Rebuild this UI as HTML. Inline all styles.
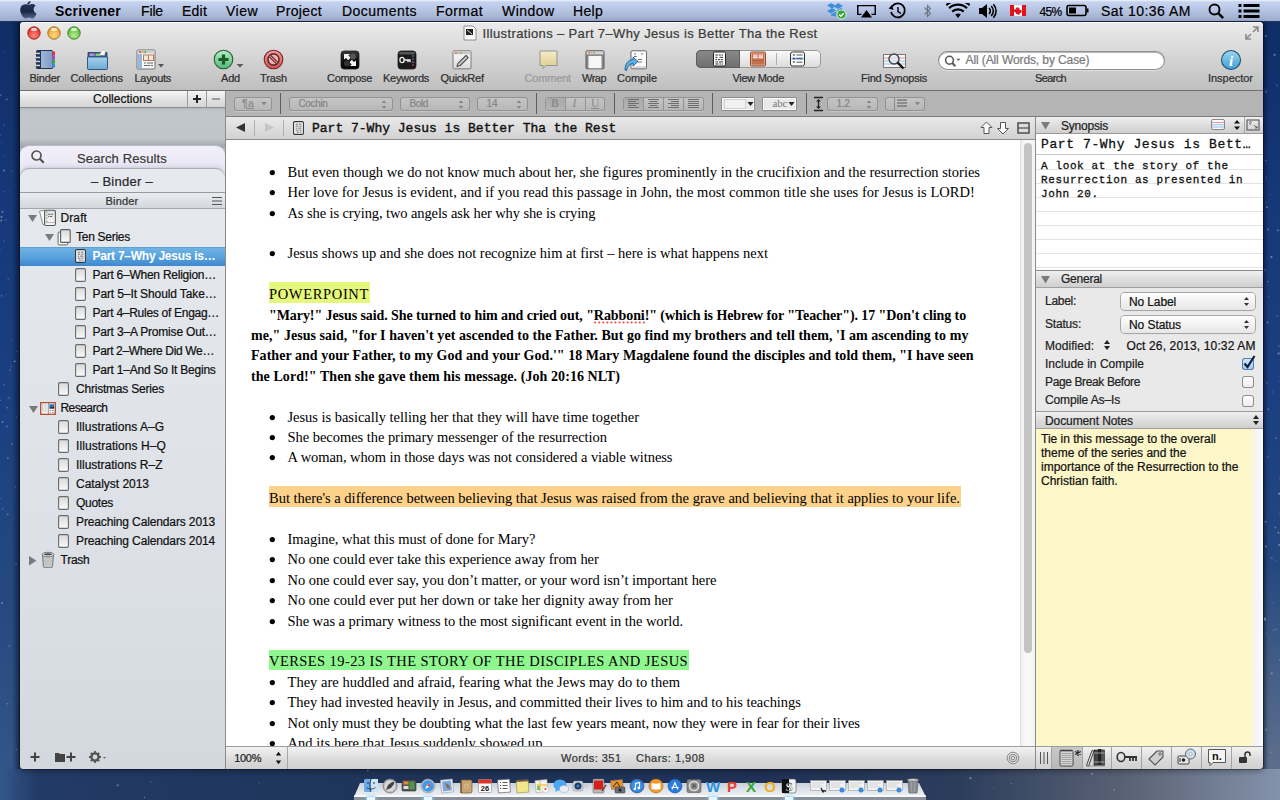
<!DOCTYPE html><html><head><meta charset="utf-8"><title>Scrivener</title><style>
*{margin:0;padding:0;box-sizing:border-box}
html,body{width:1280px;height:800px;overflow:hidden;background:#0f2a5a}
body{position:relative;font-family:"Liberation Sans",sans-serif}
.t{position:absolute;white-space:nowrap}
.r{position:absolute}
</style></head><body><div class="r" style="left:0px;top:0px;width:1280px;height:800px;background:linear-gradient(180deg,#0f2c64 0%,#163878 25%,#1b3f80 50%,#25497f 75%,#35588a 100%)"></div>
<div class="r" style="left:0px;top:769px;width:1280px;height:31px;background:linear-gradient(90deg,#33578a 0%,#223a66 3%,#1f3459 30%,#1f3156 60%,#2c3d5c 75%,#5a6275 88%,#8392aa 100%)"></div>
<div class="r" style="left:1263px;top:560px;width:17px;height:209px;background:linear-gradient(180deg,rgba(90,100,120,0) 0%,rgba(110,120,140,.7) 100%)"></div>
<div class="r" style="left:0px;top:22px;width:20px;height:747px;background:linear-gradient(90deg,rgba(0,0,0,0) 0%,rgba(0,0,0,0) 60%,rgba(5,15,40,.55) 100%)"></div>
<div class="r" style="left:1263px;top:22px;width:17px;height:747px;background:linear-gradient(90deg,rgba(5,15,40,.45) 0%,rgba(0,0,0,0) 30%)"></div>
<svg class="r" style="left:0px;top:0px;" width="1280" height="800" viewBox="0 0 1280 800"><circle cx="2.6" cy="508.9" r="0.7" fill="#d8e6ff" fill-opacity="0.39"/><circle cx="9.9" cy="702.5" r="0.7" fill="#d8e6ff" fill-opacity="0.13"/><circle cx="1266.0" cy="89.9" r="0.9" fill="#d8e6ff" fill-opacity="0.14"/><circle cx="1279.2" cy="493.7" r="1.1" fill="#d8e6ff" fill-opacity="0.43"/><circle cx="1271.0" cy="752.2" r="0.7" fill="#d8e6ff" fill-opacity="0.30"/><circle cx="7.1" cy="426.4" r="1.1" fill="#d8e6ff" fill-opacity="0.22"/><circle cx="1267.7" cy="457.0" r="1.1" fill="#d8e6ff" fill-opacity="0.18"/><circle cx="12.1" cy="444.1" r="1.1" fill="#d8e6ff" fill-opacity="0.19"/><circle cx="1271.4" cy="257.0" r="1.1" fill="#d8e6ff" fill-opacity="0.42"/><circle cx="4.2" cy="156.5" r="0.7" fill="#d8e6ff" fill-opacity="0.15"/><circle cx="8.4" cy="278.9" r="0.9" fill="#d8e6ff" fill-opacity="0.22"/><circle cx="151.1" cy="782.0" r="0.9" fill="#d8e6ff" fill-opacity="0.17"/><circle cx="1265.6" cy="521.8" r="1.1" fill="#d8e6ff" fill-opacity="0.31"/><circle cx="401.6" cy="790.6" r="1.1" fill="#d8e6ff" fill-opacity="0.28"/><circle cx="1266.0" cy="92.0" r="0.9" fill="#d8e6ff" fill-opacity="0.28"/><circle cx="1265.9" cy="546.7" r="1.1" fill="#d8e6ff" fill-opacity="0.31"/><circle cx="1271.7" cy="558.0" r="1.1" fill="#d8e6ff" fill-opacity="0.23"/><circle cx="455.0" cy="787.9" r="0.9" fill="#d8e6ff" fill-opacity="0.14"/><circle cx="1266.9" cy="207.2" r="0.9" fill="#d8e6ff" fill-opacity="0.42"/><circle cx="1267.5" cy="322.4" r="0.9" fill="#d8e6ff" fill-opacity="0.41"/><circle cx="1278.0" cy="230.3" r="0.9" fill="#d8e6ff" fill-opacity="0.45"/><circle cx="1270.7" cy="194.6" r="0.7" fill="#d8e6ff" fill-opacity="0.18"/><circle cx="4.0" cy="384.8" r="1.1" fill="#d8e6ff" fill-opacity="0.18"/><circle cx="2.5" cy="421.9" r="1.1" fill="#d8e6ff" fill-opacity="0.31"/><circle cx="883.8" cy="785.0" r="1.1" fill="#d8e6ff" fill-opacity="0.34"/><circle cx="1271.8" cy="673.5" r="1.1" fill="#d8e6ff" fill-opacity="0.38"/><circle cx="6.8" cy="99.4" r="1.1" fill="#d8e6ff" fill-opacity="0.25"/><circle cx="16.7" cy="351.6" r="0.7" fill="#d8e6ff" fill-opacity="0.23"/><circle cx="0.0" cy="135.1" r="0.7" fill="#d8e6ff" fill-opacity="0.43"/><circle cx="1266.1" cy="177.5" r="0.9" fill="#d8e6ff" fill-opacity="0.17"/><circle cx="5.9" cy="294.4" r="0.7" fill="#d8e6ff" fill-opacity="0.16"/><circle cx="1279.7" cy="381.3" r="0.9" fill="#d8e6ff" fill-opacity="0.15"/><circle cx="5.8" cy="220.0" r="1.1" fill="#d8e6ff" fill-opacity="0.17"/><circle cx="16.2" cy="417.1" r="0.7" fill="#d8e6ff" fill-opacity="0.35"/><circle cx="970.4" cy="778.2" r="1.1" fill="#d8e6ff" fill-opacity="0.40"/><circle cx="1268.9" cy="296.3" r="0.7" fill="#d8e6ff" fill-opacity="0.24"/><circle cx="9.2" cy="398.0" r="1.1" fill="#d8e6ff" fill-opacity="0.19"/><circle cx="1279.8" cy="659.8" r="0.7" fill="#d8e6ff" fill-opacity="0.39"/><circle cx="1268.4" cy="409.2" r="0.9" fill="#d8e6ff" fill-opacity="0.36"/><circle cx="1011.3" cy="783.6" r="0.7" fill="#d8e6ff" fill-opacity="0.35"/><circle cx="572.5" cy="798.0" r="0.9" fill="#d8e6ff" fill-opacity="0.44"/><circle cx="3.7" cy="191.7" r="0.7" fill="#d8e6ff" fill-opacity="0.23"/><circle cx="1279.8" cy="478.5" r="0.7" fill="#d8e6ff" fill-opacity="0.28"/><circle cx="1277.0" cy="85.4" r="1.1" fill="#d8e6ff" fill-opacity="0.16"/><circle cx="12.1" cy="171.1" r="0.7" fill="#d8e6ff" fill-opacity="0.26"/><circle cx="1266.3" cy="729.7" r="1.1" fill="#d8e6ff" fill-opacity="0.25"/><circle cx="16.1" cy="564.1" r="0.7" fill="#d8e6ff" fill-opacity="0.45"/><circle cx="10.0" cy="370.1" r="1.1" fill="#d8e6ff" fill-opacity="0.17"/><circle cx="1279.7" cy="513.6" r="0.9" fill="#d8e6ff" fill-opacity="0.17"/><circle cx="1265.3" cy="619.9" r="1.1" fill="#d8e6ff" fill-opacity="0.33"/><circle cx="1279.0" cy="346.5" r="0.7" fill="#d8e6ff" fill-opacity="0.39"/><circle cx="4.3" cy="241.1" r="0.7" fill="#d8e6ff" fill-opacity="0.37"/><circle cx="9.3" cy="646.0" r="0.7" fill="#d8e6ff" fill-opacity="0.42"/><circle cx="7.8" cy="458.3" r="1.1" fill="#d8e6ff" fill-opacity="0.26"/><circle cx="642.1" cy="785.5" r="1.1" fill="#d8e6ff" fill-opacity="0.29"/><circle cx="993.9" cy="787.9" r="0.7" fill="#d8e6ff" fill-opacity="0.18"/><circle cx="1275.9" cy="438.2" r="0.9" fill="#d8e6ff" fill-opacity="0.35"/><circle cx="1272.2" cy="602.8" r="1.1" fill="#d8e6ff" fill-opacity="0.14"/><circle cx="0.7" cy="95.1" r="0.9" fill="#d8e6ff" fill-opacity="0.31"/><circle cx="1278.7" cy="353.5" r="1.1" fill="#d8e6ff" fill-opacity="0.44"/><circle cx="1268.0" cy="229.3" r="1.1" fill="#d8e6ff" fill-opacity="0.30"/><circle cx="1279.1" cy="545.0" r="0.9" fill="#d8e6ff" fill-opacity="0.42"/><circle cx="259.3" cy="782.9" r="0.9" fill="#d8e6ff" fill-opacity="0.16"/><circle cx="1266.1" cy="202.0" r="0.7" fill="#d8e6ff" fill-opacity="0.19"/><circle cx="2.1" cy="603.1" r="1.1" fill="#d8e6ff" fill-opacity="0.33"/><circle cx="4.3" cy="124.7" r="0.9" fill="#d8e6ff" fill-opacity="0.19"/><circle cx="509.8" cy="784.1" r="1.1" fill="#d8e6ff" fill-opacity="0.39"/><circle cx="7.3" cy="407.7" r="0.9" fill="#d8e6ff" fill-opacity="0.26"/><circle cx="1.6" cy="295.7" r="0.9" fill="#d8e6ff" fill-opacity="0.30"/><circle cx="1265.3" cy="270.0" r="1.1" fill="#d8e6ff" fill-opacity="0.22"/><circle cx="144.4" cy="797.5" r="0.7" fill="#d8e6ff" fill-opacity="0.44"/><circle cx="4.5" cy="51.6" r="0.7" fill="#d8e6ff" fill-opacity="0.21"/><circle cx="7.2" cy="703.7" r="0.9" fill="#d8e6ff" fill-opacity="0.25"/><circle cx="1272.7" cy="392.0" r="0.9" fill="#d8e6ff" fill-opacity="0.15"/><circle cx="11.7" cy="340.1" r="0.7" fill="#d8e6ff" fill-opacity="0.21"/><circle cx="1.5" cy="216.9" r="1.1" fill="#d8e6ff" fill-opacity="0.40"/><circle cx="14.7" cy="361.4" r="0.9" fill="#d8e6ff" fill-opacity="0.45"/><circle cx="15.6" cy="487.0" r="0.7" fill="#d8e6ff" fill-opacity="0.29"/><circle cx="1.9" cy="142.8" r="0.7" fill="#d8e6ff" fill-opacity="0.18"/><circle cx="804.7" cy="785.5" r="0.7" fill="#d8e6ff" fill-opacity="0.22"/><circle cx="1267.7" cy="281.6" r="0.7" fill="#d8e6ff" fill-opacity="0.45"/><circle cx="0.3" cy="400.2" r="0.7" fill="#d8e6ff" fill-opacity="0.29"/><circle cx="7.6" cy="514.4" r="1.1" fill="#d8e6ff" fill-opacity="0.26"/><circle cx="1277.5" cy="316.0" r="1.1" fill="#d8e6ff" fill-opacity="0.22"/><circle cx="3.9" cy="170.6" r="1.1" fill="#d8e6ff" fill-opacity="0.36"/><circle cx="16.8" cy="756.4" r="0.7" fill="#d8e6ff" fill-opacity="0.12"/><circle cx="1278.2" cy="344.2" r="0.7" fill="#d8e6ff" fill-opacity="0.15"/><circle cx="1114.3" cy="789.8" r="0.9" fill="#d8e6ff" fill-opacity="0.32"/><circle cx="1265.7" cy="160.6" r="0.9" fill="#d8e6ff" fill-opacity="0.27"/><circle cx="16.4" cy="749.5" r="1.1" fill="#d8e6ff" fill-opacity="0.23"/><circle cx="15.0" cy="185.0" r="0.7" fill="#d8e6ff" fill-opacity="0.12"/><circle cx="8.1" cy="398.1" r="0.7" fill="#d8e6ff" fill-opacity="0.20"/><circle cx="1266.4" cy="633.1" r="0.7" fill="#d8e6ff" fill-opacity="0.25"/><circle cx="0.4" cy="249.6" r="0.7" fill="#d8e6ff" fill-opacity="0.15"/><circle cx="1092.2" cy="773.8" r="1.1" fill="#d8e6ff" fill-opacity="0.38"/><circle cx="1276.5" cy="561.1" r="0.9" fill="#d8e6ff" fill-opacity="0.17"/><circle cx="1274.6" cy="54.8" r="1.1" fill="#d8e6ff" fill-opacity="0.41"/><circle cx="1276.0" cy="629.5" r="0.7" fill="#d8e6ff" fill-opacity="0.42"/><circle cx="1273.5" cy="630.1" r="0.7" fill="#d8e6ff" fill-opacity="0.39"/><circle cx="1278.4" cy="532.8" r="1.1" fill="#d8e6ff" fill-opacity="0.33"/><circle cx="0.7" cy="498.6" r="0.7" fill="#d8e6ff" fill-opacity="0.24"/><circle cx="1265.8" cy="36.1" r="1.1" fill="#d8e6ff" fill-opacity="0.34"/><circle cx="1265.0" cy="618.7" r="1.1" fill="#d8e6ff" fill-opacity="0.43"/><circle cx="117.7" cy="785.3" r="1.1" fill="#d8e6ff" fill-opacity="0.36"/><circle cx="1.3" cy="220.6" r="1.1" fill="#d8e6ff" fill-opacity="0.37"/><circle cx="11.0" cy="366.3" r="0.9" fill="#d8e6ff" fill-opacity="0.15"/><circle cx="367.8" cy="770.4" r="1.1" fill="#d8e6ff" fill-opacity="0.33"/><circle cx="2.5" cy="211.9" r="1.1" fill="#d8e6ff" fill-opacity="0.35"/><circle cx="1267.0" cy="382.9" r="0.9" fill="#d8e6ff" fill-opacity="0.21"/><circle cx="1275.4" cy="527.4" r="0.9" fill="#d8e6ff" fill-opacity="0.35"/></svg>
<div class="r" style="left:0px;top:0px;width:1280px;height:21px;background:linear-gradient(180deg,#eef2fa 0px,#c6d3ef 2px,#b6c4e4 50%,#9daccb 100%)"></div>
<div class="r" style="left:0px;top:21px;width:1280px;height:1px;background:#24355c"></div>
<svg class="r" style="left:19px;top:1px;" width="18" height="19" viewBox="0 0 18 19"><defs><linearGradient id="ap" x1="0" y1="0" x2="0" y2="1"><stop offset="0" stop-color="#2a3a5e"/><stop offset=".6" stop-color="#1a2746"/><stop offset="1" stop-color="#56688e"/></linearGradient></defs><path d="M11.6 1.2c-.9.1-2 .7-2.6 1.5-.6.7-1 1.7-.9 2.6 1 .1 2-.5 2.6-1.3.6-.8 1-1.8.9-2.8zM14.6 10.1c0-2.4 2-3.5 2.1-3.6-1.1-1.7-2.9-1.9-3.5-1.9-1.5-.2-2.9.9-3.7.9-.8 0-1.9-.9-3.2-.8C4.600 4.700 3 5.700 2.100 7.200.300 10.400 1.600 15.100 3.400 17.600c.9 1.200 1.900 2.600 3.200 2.500 1.300-.1 1.800-.8 3.300-.8s2 .8 3.300.8c1.400 0 2.200-1.200 3.100-2.500.6-.9 1.100-1.800 1.400-2.800-.1 0-2.900-1.100-3.100-4.700z" transform="translate(0,-1.2) scale(1,0.93)" fill="url(#ap)"/></svg>
<div class="t " style="left:55px;top:4.00px;font-family:'Liberation Sans', sans-serif;font-weight:700;font-size:14px;line-height:14px;color:#000;letter-spacing:0.243px;">Scrivener</div>
<div class="t " style="left:141px;top:4.00px;font-family:'Liberation Sans', sans-serif;font-weight:400;font-size:14px;line-height:14px;color:#000;letter-spacing:-0.137px;-webkit-text-stroke:0.22px currentColor;">File</div>
<div class="t " style="left:182px;top:4.00px;font-family:'Liberation Sans', sans-serif;font-weight:400;font-size:14px;line-height:14px;color:#000;letter-spacing:0.219px;-webkit-text-stroke:0.22px currentColor;">Edit</div>
<div class="t " style="left:226px;top:4.00px;font-family:'Liberation Sans', sans-serif;font-weight:400;font-size:14px;line-height:14px;color:#000;letter-spacing:0.477px;-webkit-text-stroke:0.22px currentColor;">View</div>
<div class="t " style="left:276px;top:4.00px;font-family:'Liberation Sans', sans-serif;font-weight:400;font-size:14px;line-height:14px;color:#000;letter-spacing:0.348px;-webkit-text-stroke:0.22px currentColor;">Project</div>
<div class="t " style="left:342px;top:4.00px;font-family:'Liberation Sans', sans-serif;font-weight:400;font-size:14px;line-height:14px;color:#000;letter-spacing:0.469px;-webkit-text-stroke:0.22px currentColor;">Documents</div>
<div class="t " style="left:436px;top:4.00px;font-family:'Liberation Sans', sans-serif;font-weight:400;font-size:14px;line-height:14px;color:#000;letter-spacing:0.448px;-webkit-text-stroke:0.22px currentColor;">Format</div>
<div class="t " style="left:502px;top:4.00px;font-family:'Liberation Sans', sans-serif;font-weight:400;font-size:14px;line-height:14px;color:#000;letter-spacing:0.453px;-webkit-text-stroke:0.22px currentColor;">Window</div>
<div class="t " style="left:573px;top:4.00px;font-family:'Liberation Sans', sans-serif;font-weight:400;font-size:14px;line-height:14px;color:#000;letter-spacing:0.305px;-webkit-text-stroke:0.22px currentColor;">Help</div>
<div class="t " style="left:1039.5px;top:5.50px;font-family:'Liberation Sans', sans-serif;font-weight:400;font-size:12px;line-height:12px;color:#000;letter-spacing:-0.672px;-webkit-text-stroke:0.22px currentColor;">45%</div>
<div class="t " style="left:1101px;top:4.00px;font-family:'Liberation Sans', sans-serif;font-weight:400;font-size:14px;line-height:14px;color:#000;letter-spacing:0.496px;-webkit-text-stroke:0.22px currentColor;">Sat 10:36 AM</div>
<svg class="r" style="left:826px;top:2px;" width="22" height="18" viewBox="0 0 22 18"><g fill="#3d8fd6"><path d="M5 1l5 3-4 2.5-5-3z"/><path d="M15 1l5 3-5 3-4-2.5z" transform="translate(-3,0)"/><path d="M1 9l5-3 4 2.6-5 3z"/><path d="M11 8.6l4-2.6 2 1.2-4 3z"/><path d="M5 12.5l5-3 .5.3v5L5 13.5z"/></g><circle cx="15.5" cy="12.5" r="4.6" fill="#35a535" stroke="#e8f3e8" stroke-width="1"/><path d="M13.3 12.6l1.6 1.6 2.8-3" stroke="#fff" stroke-width="1.5" fill="none"/></svg>
<svg class="r" style="left:856px;top:4px;" width="21" height="14" viewBox="0 0 21 14"><path d="M1 1h19v10h-4l-1-1.2h3.5V2.3H2.5v7.5H6L5 11H1z" fill="#000"/><path d="M10.5 6L16 13.5H5z" fill="#000"/></svg>
<svg class="r" style="left:888px;top:2px;" width="19" height="18" viewBox="0 0 19 18"><path d="M4.2 4.2A7 7 0 1 1 3 10" stroke="#000" stroke-width="1.8" fill="none"/><path d="M0.5 6.5L4.2 2.8 5.5 8z" fill="#000"/><path d="M10 5v4.5l3 2" stroke="#000" stroke-width="1.5" fill="none"/></svg>
<svg class="r" style="left:923px;top:3px;" width="9" height="16" viewBox="0 0 9 16"><path d="M1.5 4.5l6 6-3 3v-11l3 3-6 6" stroke="#6c7280" stroke-width="1.1" fill="none"/></svg>
<svg class="r" style="left:946px;top:3px;" width="24" height="16" viewBox="0 0 24 16"><path d="M12 15l-2.8-3.4a4.5 4.5 0 0 1 5.6 0z" fill="#000"/><path d="M6.2 8.6a8.5 8.5 0 0 1 11.6 0" stroke="#000" stroke-width="2.2" fill="none"/><path d="M3 5.2a13 13 0 0 1 18 0" stroke="#000" stroke-width="2.2" fill="none"/><path d="M0.3 2.2a17 17 0 0 1 23.4 0" stroke="#000" stroke-width="2.2" fill="none"/></svg>
<svg class="r" style="left:978px;top:3px;" width="19" height="16" viewBox="0 0 19 16"><path d="M1 5h3l5-4v14l-5-4H1z" fill="#000"/><path d="M11 5a4 4 0 0 1 0 6M13.2 3a7 7 0 0 1 0 10M15.4 1.2a10 10 0 0 1 0 13.6" stroke="#000" stroke-width="1.6" fill="none"/></svg>
<svg class="r" style="left:1010px;top:5px;" width="16" height="11" viewBox="0 0 16 11"><rect width="16" height="11" fill="#fff" stroke="#bbb" stroke-width=".5"/><rect x="0" y="0" width="4" height="11" fill="#e0101c"/><rect x="12" y="0" width="4" height="11" fill="#e0101c"/><path d="M8 2l.8 1.6 1-.4-.4 2.3 1.3-.9.3.8 1-.1-.6 1.5.6.4-2.6 1.6.3.9H8.2V10h-.4V8.9H6l.3-.9-2.6-1.6.6-.4-.6-1.5 1 .1.3-.8 1.3.9-.4-2.3 1 .4z" fill="#e0101c"/></svg>
<svg class="r" style="left:1066px;top:4px;" width="23" height="13" viewBox="0 0 23 13"><rect x="1" y="1.5" width="19" height="10" rx="2" stroke="#000" stroke-width="1.6" fill="none"/><rect x="3" y="3.5" width="7" height="6" fill="#000"/><rect x="20.5" y="4.5" width="2" height="4" fill="#000"/></svg>
<svg class="r" style="left:1208px;top:3px;" width="17" height="16" viewBox="0 0 17 16"><circle cx="6.5" cy="6.5" r="5" stroke="#000" stroke-width="1.9" fill="none"/><path d="M10.2 10.2l5 5" stroke="#000" stroke-width="2.4"/></svg>
<svg class="r" style="left:1238px;top:3px;" width="23" height="16" viewBox="0 0 23 16"><g fill="#000"><rect x="0.5" y="1" width="3" height="3"/><rect x="0.5" y="6.5" width="3" height="3"/><rect x="0.5" y="12" width="3" height="3"/><rect x="5.5" y="1" width="16" height="3"/><rect x="5.5" y="6.5" width="16" height="3"/><rect x="5.5" y="12" width="16" height="3"/></g></svg>
<div class="r" style="left:20px;top:22px;width:1243px;height:747px;background:#bdbdbd;border-radius:4px 4px 4px 4px;box-shadow:0 0 0 1px rgba(0,0,0,0.3),0 2px 6px rgba(0,0,0,.35)"></div>
<div class="r" style="left:20px;top:22px;width:1243px;height:68px;background:linear-gradient(180deg,#ebebeb 0%,#dadada 40%,#bfbfbf 100%);border-radius:4px 4px 0 0;box-shadow:inset 0 1px 0 #f8f8f8"></div>
<div class="r" style="left:20px;top:90px;width:1243px;height:1px;background:#6f6f6f"></div>
<svg class="r" style="left:27px;top:26px;" width="14" height="14" viewBox="0 0 14 14"><defs><radialGradient id="tl34" cx="50%" cy="70%" r="60%"><stop offset="0" stop-color="#ff8a80"/><stop offset="1" stop-color="#e2312b"/></radialGradient></defs><circle cx="7" cy="7" r="6.2" fill="url(#tl34)" stroke="#9d1a14" stroke-width="0.9"/><ellipse cx="7" cy="3.4" rx="3" ry="1.6" fill="#fff" fill-opacity=".75"/></svg>
<svg class="r" style="left:47px;top:26px;" width="14" height="14" viewBox="0 0 14 14"><defs><radialGradient id="tl54" cx="50%" cy="70%" r="60%"><stop offset="0" stop-color="#ffd58a"/><stop offset="1" stop-color="#f0a22a"/></radialGradient></defs><circle cx="7" cy="7" r="6.2" fill="url(#tl54)" stroke="#9a6412" stroke-width="0.9"/><ellipse cx="7" cy="3.4" rx="3" ry="1.6" fill="#fff" fill-opacity=".75"/></svg>
<svg class="r" style="left:67px;top:26px;" width="14" height="14" viewBox="0 0 14 14"><defs><radialGradient id="tl74" cx="50%" cy="70%" r="60%"><stop offset="0" stop-color="#b9ec95"/><stop offset="1" stop-color="#5cbf36"/></radialGradient></defs><circle cx="7" cy="7" r="6.2" fill="url(#tl74)" stroke="#2f7a1a" stroke-width="0.9"/><ellipse cx="7" cy="3.4" rx="3" ry="1.6" fill="#fff" fill-opacity=".75"/></svg>
<svg class="r" style="left:1244px;top:25px;" width="16" height="16" viewBox="0 0 16 16"><path d="M9 2h5v5M14 2l-5 5M7 14H2V9M2 14l5-5" stroke="#8a8a8a" stroke-width="1.6" fill="none"/></svg>
<svg class="r" style="left:463px;top:25px;" width="14" height="16" viewBox="0 0 14 16"><path d="M1 1h9l3 3v11H1z" fill="#fafafa" stroke="#777" stroke-width=".8"/><path d="M3 4h7v6H3z" fill="#222"/><path d="M4 5l5 4" stroke="#ddd" stroke-width="1"/></svg>
<div class="t " style="left:482.5px;top:27.00px;font-family:'Liberation Sans', sans-serif;font-weight:400;font-size:13px;line-height:13px;color:#3a3a3a;letter-spacing:0.367px;-webkit-text-stroke:0.22px currentColor;">Illustrations – Part 7–Why Jesus is Better Tha the Rest</div>
<div class="t " style="left:29.5px;top:73.00px;font-family:'Liberation Sans', sans-serif;font-weight:400;font-size:11px;line-height:11px;color:#2e2e2e;letter-spacing:-0.219px;-webkit-text-stroke:0.22px currentColor;">Binder</div>
<div class="t " style="left:70.5px;top:73.00px;font-family:'Liberation Sans', sans-serif;font-weight:400;font-size:11px;line-height:11px;color:#2e2e2e;letter-spacing:-0.119px;-webkit-text-stroke:0.22px currentColor;">Collections</div>
<div class="t " style="left:134.5px;top:73.00px;font-family:'Liberation Sans', sans-serif;font-weight:400;font-size:11px;line-height:11px;color:#2e2e2e;letter-spacing:-0.295px;-webkit-text-stroke:0.22px currentColor;">Layouts</div>
<div class="t " style="left:221px;top:73.00px;font-family:'Liberation Sans', sans-serif;font-weight:400;font-size:11px;line-height:11px;color:#2e2e2e;letter-spacing:-0.198px;-webkit-text-stroke:0.22px currentColor;">Add</div>
<div class="t " style="left:260px;top:73.00px;font-family:'Liberation Sans', sans-serif;font-weight:400;font-size:11px;line-height:11px;color:#2e2e2e;letter-spacing:-0.144px;-webkit-text-stroke:0.22px currentColor;">Trash</div>
<div class="t " style="left:327px;top:73.00px;font-family:'Liberation Sans', sans-serif;font-weight:400;font-size:11px;line-height:11px;color:#2e2e2e;letter-spacing:-0.299px;-webkit-text-stroke:0.22px currentColor;">Compose</div>
<div class="t " style="left:383px;top:73.00px;font-family:'Liberation Sans', sans-serif;font-weight:400;font-size:11px;line-height:11px;color:#2e2e2e;letter-spacing:-0.289px;-webkit-text-stroke:0.22px currentColor;">Keywords</div>
<div class="t " style="left:440.5px;top:73.00px;font-family:'Liberation Sans', sans-serif;font-weight:400;font-size:11px;line-height:11px;color:#2e2e2e;letter-spacing:-0.250px;-webkit-text-stroke:0.22px currentColor;">QuickRef</div>
<div class="t " style="left:524.5px;top:73.00px;font-family:'Liberation Sans', sans-serif;font-weight:400;font-size:11px;line-height:11px;color:#9a9a9a;letter-spacing:-0.170px;-webkit-text-stroke:0.22px currentColor;">Comment</div>
<div class="t " style="left:582px;top:73.00px;font-family:'Liberation Sans', sans-serif;font-weight:400;font-size:11px;line-height:11px;color:#2e2e2e;letter-spacing:-0.520px;-webkit-text-stroke:0.22px currentColor;">Wrap</div>
<div class="t " style="left:617px;top:73.00px;font-family:'Liberation Sans', sans-serif;font-weight:400;font-size:11px;line-height:11px;color:#2e2e2e;letter-spacing:-0.049px;-webkit-text-stroke:0.22px currentColor;">Compile</div>
<div class="t " style="left:732.5px;top:73.00px;font-family:'Liberation Sans', sans-serif;font-weight:400;font-size:11px;line-height:11px;color:#2e2e2e;letter-spacing:-0.304px;-webkit-text-stroke:0.22px currentColor;">View Mode</div>
<div class="t " style="left:861px;top:73.00px;font-family:'Liberation Sans', sans-serif;font-weight:400;font-size:11px;line-height:11px;color:#2e2e2e;letter-spacing:-0.240px;-webkit-text-stroke:0.22px currentColor;">Find Synopsis</div>
<div class="t " style="left:1035px;top:73.00px;font-family:'Liberation Sans', sans-serif;font-weight:400;font-size:11px;line-height:11px;color:#2e2e2e;letter-spacing:-0.646px;-webkit-text-stroke:0.22px currentColor;">Search</div>
<div class="t " style="left:1208px;top:73.00px;font-family:'Liberation Sans', sans-serif;font-weight:400;font-size:11px;line-height:11px;color:#2e2e2e;letter-spacing:-0.031px;-webkit-text-stroke:0.22px currentColor;">Inspector</div>
<svg class="r" style="left:34px;top:49px;" width="22" height="21" viewBox="0 0 22 21"><defs><linearGradient id="gb" x1="0" y1="0" x2="1" y2="0"><stop offset="0" stop-color="#9fb6d8"/><stop offset="1" stop-color="#7f9cc6"/></linearGradient></defs><rect x="2" y="1" width="17" height="19" rx="1.5" fill="#1f3454"/><rect x="7" y="2" width="11" height="17" fill="url(#gb)"/><rect x="18" y="2.5" width="3" height="4" fill="#d8343a"/><rect x="18" y="6.5" width="3" height="4" fill="#9a4ac8"/><rect x="18" y="10.5" width="3" height="4" fill="#3aa04a"/><rect x="18" y="14.5" width="3" height="4" fill="#3a8ad8"/><g stroke="#f4f4f4" stroke-width="1.3"><path d="M1 4.5h5M1 8.5h5M1 12.5h5M1 16.5h5"/></g><g stroke="#333" stroke-width=".5"><path d="M1 5.2h5M1 9.2h5M1 13.2h5M1 17.2h5"/></g></svg>
<svg class="r" style="left:86px;top:49px;" width="23" height="22" viewBox="0 0 23 22"><defs><linearGradient id="gc" x1="0" y1="0" x2="0" y2="1"><stop offset="0" stop-color="#a8d2ee"/><stop offset="1" stop-color="#6eaad6"/></linearGradient></defs><path d="M2 3.5h19v10H2z" fill="#2e5a82" stroke="#1e3e5e" stroke-width=".8"/><rect x="3.5" y="4.5" width="5" height="2.5" fill="#c08ae0"/><rect x="9.5" y="4.5" width="5" height="2.5" fill="#7ad07a"/><path d="M13 6l4-5.5 2.5 2-1 4z" fill="#fafafa" stroke="#999" stroke-width=".5"/><path d="M1.5 8h20v11.5a1 1 0 0 1-1 1h-18a1 1 0 0 1-1-1z" fill="url(#gc)" stroke="#2e5a82" stroke-width="1"/></svg>
<svg class="r" style="left:136px;top:49px;" width="30" height="21" viewBox="0 0 30 21"><rect x="1" y="1" width="18" height="19" rx="1" fill="#f8f8f8" stroke="#6e6e6e" stroke-width="1"/><rect x="1.5" y="1.5" width="17" height="3" fill="#cfcfcf"/><circle cx="4" cy="3" r=".9" fill="#e04040"/><circle cx="6.6" cy="3" r=".9" fill="#e0a030"/><circle cx="9.2" cy="3" r=".9" fill="#40b040"/><rect x="1.5" y="5" width="4.5" height="14.5" fill="#9ab6dc"/><rect x="7" y="5.5" width="11" height="6.5" fill="#b87a50"/><rect x="8" y="6.5" width="4" height="4.5" fill="#f6e6e0"/><rect x="13" y="6.5" width="4" height="4.5" fill="#f6e6e0"/><path d="M8 14h2M11 14h6M8 16.5h6M15 16.5h2" stroke="#555" stroke-width=".9"/><path d="M22 15h6l-3 3.5z" fill="#555"/></svg>
<svg class="r" style="left:213px;top:49px;" width="31" height="21" viewBox="0 0 31 21"><defs><linearGradient id="ga" x1="0" y1="0" x2="0" y2="1"><stop offset="0" stop-color="#b4f0c4"/><stop offset="1" stop-color="#52b874"/></linearGradient></defs><circle cx="10.5" cy="10.5" r="9.3" fill="url(#ga)" stroke="#265e36" stroke-width="1.1"/><path d="M10.5 5.5v10M5.5 10.5h10" stroke="#1f5a2e" stroke-width="3.2"/><path d="M23.5 15h7l-3.5 3.6z" fill="#5a5a5a"/></svg>
<svg class="r" style="left:263px;top:49px;" width="21" height="21" viewBox="0 0 21 21"><defs><linearGradient id="gt" x1="0" y1="0" x2="0" y2="1"><stop offset="0" stop-color="#f8a0a0"/><stop offset="1" stop-color="#dc4c4c"/></linearGradient></defs><circle cx="10.5" cy="10.5" r="9.3" fill="url(#gt)" stroke="#7a2424" stroke-width="1.1"/><circle cx="10.5" cy="10.5" r="5.6" fill="#f6b0b0" stroke="#5a3030" stroke-width="1.6"/><path d="M6.6 6.6l7.8 7.8" stroke="#5a3030" stroke-width="3.2"/><path d="M6.8 6.8l7.4 7.4" stroke="#f08080" stroke-width="1.2"/></svg>
<svg class="r" style="left:340px;top:50px;" width="20" height="20" viewBox="0 0 20 20"><defs><linearGradient id="gk" x1="0" y1="0" x2="0" y2="1"><stop offset="0" stop-color="#3a3a3a"/><stop offset=".5" stop-color="#111"/><stop offset="1" stop-color="#000"/></linearGradient></defs><rect x="1" y="1" width="18" height="18" rx="3" fill="url(#gk)" stroke="#222" stroke-width=".8"/><path d="M4 4h6l-1.6 1.6 2.2 2.2-2.4 2.4-2.2-2.2L4 9.6z" fill="#f2f2f2"/><path d="M16 16h-6l1.6-1.6-2.2-2.2 2.4-2.4 2.2 2.2 2-1.6z" fill="#f2f2f2"/><circle cx="13" cy="6.5" r="3" fill="#555"/><circle cx="7" cy="13.5" r="3" fill="#333"/></svg>
<svg class="r" style="left:397px;top:50px;" width="20" height="20" viewBox="0 0 20 20"><rect x="1" y="1" width="18" height="18" rx="3" fill="#1a1a1a" stroke="#222" stroke-width=".8"/><rect x="2" y="2" width="16" height="2.5" rx="1" fill="#555"/><path d="M2 12.5h16" stroke="#444" stroke-width=".6"/><ellipse cx="5" cy="10" rx="2.1" ry="2.6" fill="none" stroke="#f0f0f0" stroke-width="1.3"/><path d="M7.2 10h6.3M11 10v2M13 10v2" stroke="#f0f0f0" stroke-width="1.4"/><circle cx="16" cy="6" r=".8" fill="#5c5"/><circle cx="16" cy="9" r=".8" fill="#4ad"/><circle cx="16" cy="12" r=".8" fill="#c5c"/><circle cx="16" cy="15" r=".8" fill="#e55"/></svg>
<svg class="r" style="left:452px;top:50px;" width="20" height="20" viewBox="0 0 20 20"><defs><linearGradient id="gq" x1="0" y1="0" x2="0" y2="1"><stop offset="0" stop-color="#fafafa"/><stop offset="1" stop-color="#dcdcdc"/></linearGradient></defs><rect x="1" y=".8" width="18" height="18" rx="1" fill="url(#gq)" stroke="#7a7a7a" stroke-width="1"/><rect x="1.5" y="1.3" width="17" height="3" fill="#c8c8c8"/><circle cx="4" cy="2.8" r=".8" fill="#e04040"/><circle cx="6.5" cy="2.8" r=".8" fill="#e0a030"/><circle cx="9" cy="2.8" r=".8" fill="#40b040"/><path d="M5 16.5l1-3.2 8-7.8 2.2 2.2-8 7.8z" fill="#cfcfcf" stroke="#4a4a4a" stroke-width="1.1" stroke-linejoin="round"/></svg>
<svg class="r" style="left:538px;top:50px;" width="21" height="20" viewBox="0 0 21 20"><defs><linearGradient id="gm" x1="0" y1="0" x2="0" y2="1"><stop offset="0" stop-color="#f4ecc4"/><stop offset="1" stop-color="#dccb8e"/></linearGradient></defs><path d="M2 1h17v14.5H8l-3 3v-3H2z" fill="url(#gm)" stroke="#8c8c8c" stroke-width=".9" stroke-linejoin="round"/></svg>
<svg class="r" style="left:585px;top:50px;" width="20" height="20" viewBox="0 0 20 20"><rect x="1" y=".8" width="18" height="18" rx="1" fill="#8a8a8a" stroke="#5a5a5a" stroke-width="1"/><rect x="1.5" y="1.3" width="17" height="3" fill="#d4d4d4"/><circle cx="4.2" cy="2.8" r=".8" fill="#e04040"/><circle cx="6.7" cy="2.8" r=".8" fill="#e0a030"/><circle cx="9.2" cy="2.8" r=".8" fill="#40b040"/><rect x="3.5" y="6" width="13" height="12.3" fill="#f6f6f6"/></svg>
<svg class="r" style="left:623px;top:50px;" width="25" height="21" viewBox="0 0 25 21"><rect x="8" y=".8" width="15.5" height="18" rx="1" fill="#fbfbfb" stroke="#6a6a6a" stroke-width="1"/><path d="M9 17h14" stroke="#bbb" stroke-width="1"/><path d="M11 4h2M18 4h2M11 6.5h3M15 9.5h4M11 12h2M15 12h4" stroke="#555" stroke-width=".8"/><path d="M2 20c0-6 3-10 8-10.5V7l5 4.5-5 4.5v-2.5c-3 .3-5.5 2.5-6.5 7z" fill="#5ab0e4" stroke="#1e5a88" stroke-width=".9" stroke-linejoin="round"/></svg>
<div class="r" style="left:696px;top:50px;width:125px;height:18px;border-radius:5px;background:linear-gradient(180deg,#fbfbfb,#dadada);box-shadow:inset 0 0 0 1px #9a9a9a"></div>
<div class="r" style="left:696px;top:50px;width:44px;height:18px;border-radius:5px 0 0 5px;background:linear-gradient(180deg,#8a8a8a,#6e6e6e);box-shadow:inset 0 0 0 1px #5e5e5e"></div>
<div class="r" style="left:776px;top:53px;width:1px;height:12px;background:#b0b0b0"></div>
<svg class="r" style="left:712px;top:51px;" width="15" height="16" viewBox="0 0 15 16"><rect x="1.5" y="1" width="12" height="14" rx="1.2" fill="#fcfcfc" stroke="#222" stroke-width="1"/><g fill="#333"><rect x="3.5" y="3.5" width="2.5" height="1"/><rect x="6.8" y="3.5" width="2" height="1"/><rect x="9.5" y="3.5" width="1.5" height="1"/><rect x="3.5" y="5.8" width="2" height="1"/><rect x="7.5" y="5.8" width="3.5" height="1"/><rect x="3.5" y="8.1" width="1.5" height="1"/><rect x="5.8" y="8.1" width="2.5" height="1"/><rect x="9" y="8.1" width="2" height="1"/><rect x="3.5" y="10.4" width="2.5" height="1"/><rect x="7" y="10.4" width="4" height="1"/><rect x="3.5" y="12.5" width="3" height="1"/><rect x="7.5" y="12.5" width="1.5" height="1"/><rect x="9.8" y="12.5" width="1.2" height="1"/></g></svg>
<svg class="r" style="left:749px;top:51px;" width="18" height="16" viewBox="0 0 18 16"><rect x="1.5" y="1" width="15" height="14" rx="1.2" fill="#c2714e" stroke="#8a4a2e" stroke-width="1"/><rect x="2.5" y="2" width="13" height="12" fill="none" stroke="#e8b090" stroke-width=".8"/><rect x="4" y="3.5" width="4.5" height="3.8" fill="#fbeaea"/><rect x="9.5" y="3.5" width="4.5" height="3.8" fill="#fbeaea"/><path d="M4 5h4.5M9.5 5h4.5" stroke="#e06060" stroke-width=".6"/><path d="M3 9.5h12" stroke="#a85a3a" stroke-width=".6"/></svg>
<svg class="r" style="left:789px;top:51px;" width="17" height="16" viewBox="0 0 17 16"><rect x="1.5" y="1" width="14" height="14" rx="2" fill="#fcfcfc" stroke="#333" stroke-width="1"/><rect x="2.5" y="6.3" width="12" height="2.6" fill="#9cc4ec"/><path d="M3.5 3.5h3l-1.5 1.6zM3.5 7h3l-1.5 1.6zM3.5 10.5h3l-1.5 1.6z" fill="#333"/><path d="M7.5 4h6M7.5 7.6h6M7.5 11.2h6" stroke="#555" stroke-width="1"/></svg>
<svg class="r" style="left:883px;top:52px;" width="24" height="19" viewBox="0 0 24 19"><rect x=".5" y="2.5" width="22" height="13" fill="#f8f8f8" stroke="#777"/><path d="M1 6h21" stroke="#e58080" stroke-width=".9"/><path d="M1 9h21M1 12h21" stroke="#8fb1e0" stroke-width=".9"/><circle cx="11" cy="7" r="5" fill="#dbe8f5" fill-opacity=".7" stroke="#444" stroke-width="1.4"/><path d="M14.5 10.5l6 6" stroke="#111" stroke-width="2.4"/></svg>
<div class="r" style="left:939px;top:52px;width:225px;height:17px;border-radius:9px;background:#fff;box-shadow:inset 0 1px 1px rgba(0,0,0,.3),0 0 0 1px #8e8e8e,0 1px 0 1px rgba(255,255,255,.4)"></div>
<svg class="r" style="left:944px;top:55px;" width="18" height="13" viewBox="0 0 18 13"><circle cx="5.5" cy="5.2" r="3.9" fill="none" stroke="#5a5a5a" stroke-width="1.6"/><path d="M8.3 8l3 3.2" stroke="#5a5a5a" stroke-width="2"/><path d="M12.5 3.8h3.8l-1.9 2.2z" fill="#5a5a5a"/></svg>
<div class="t " style="left:965.5px;top:54.00px;font-family:'Liberation Sans', sans-serif;font-weight:400;font-size:12px;line-height:12px;color:#7a7a7a;letter-spacing:-0.103px;-webkit-text-stroke:0.22px currentColor;">All (All Words, by Case)</div>
<svg class="r" style="left:1220px;top:49px;" width="22" height="22" viewBox="0 0 22 22"><defs><linearGradient id="gi" x1="0" y1="0" x2="0" y2="1"><stop offset="0" stop-color="#9cd6f0"/><stop offset="1" stop-color="#3f9fd2"/></linearGradient></defs><circle cx="11" cy="11" r="9.5" fill="url(#gi)" stroke="#1d4f6e" stroke-width="1.1"/><text x="11" y="16.5" text-anchor="middle" font-family="Liberation Serif" font-style="italic" font-weight="700" font-size="15" fill="#fff">i</text></svg>
<div class="r" style="left:20px;top:91px;width:205px;height:16px;background:linear-gradient(180deg,#f7f7f7,#e2e2e2 50%,#d6d6d6)"></div>
<div class="r" style="left:20px;top:107px;width:205px;height:1px;background:#8e8e8e"></div>
<div class="r" style="left:187px;top:91px;width:1px;height:16px;background:#9a9a9a"></div>
<div class="r" style="left:206px;top:91px;width:1px;height:16px;background:#9a9a9a"></div>
<div class="t " style="left:93px;top:93.00px;font-family:'Liberation Sans', sans-serif;font-weight:400;font-size:12px;line-height:12px;color:#111;letter-spacing:0.027px;-webkit-text-stroke:0.22px currentColor;">Collections</div>
<svg class="r" style="left:191px;top:94px;" width="12" height="10" viewBox="0 0 12 10"><path d="M6 1v8M2 5h8" stroke="#222" stroke-width="2"/></svg>
<svg class="r" style="left:210px;top:94px;" width="12" height="10" viewBox="0 0 12 10"><path d="M2 5h8" stroke="#8a8a8a" stroke-width="1.6"/></svg>
<div class="r" style="left:20px;top:108px;width:205px;height:40px;background:linear-gradient(180deg,#b4b8bf 0px,#c1c6cd 3px,#c0c5cc 31px,#a4a8af 38px)"></div>
<div class="r" style="left:20px;top:146px;width:205px;height:36px;background:linear-gradient(180deg,#f1eff9,#e8e5f3);border-radius:9px 9px 0 0;box-shadow:0 -1px 0 #b9bcc6"></div>
<svg class="r" style="left:30px;top:149px;" width="16" height="16" viewBox="0 0 16 16"><circle cx="6.5" cy="6.5" r="4.5" fill="none" stroke="#555" stroke-width="1.7"/><path d="M9.8 9.8l4 4" stroke="#555" stroke-width="2.2"/></svg>
<div class="t " style="left:77.0px;top:152.00px;font-family:'Liberation Sans', sans-serif;font-weight:400;font-size:13px;line-height:13px;color:#3a3a3a;letter-spacing:0.131px;-webkit-text-stroke:0.22px currentColor;">Search Results</div>
<div class="r" style="left:20px;top:169px;width:205px;height:24px;background:#e6e9ed;border-radius:9px 9px 0 0;box-shadow:0 -1px 1px rgba(0,0,0,.22),0 -3px 4px rgba(60,50,90,.12)"></div>
<div class="t " style="left:91.0px;top:175.00px;font-family:'Liberation Sans', sans-serif;font-weight:400;font-size:13px;line-height:13px;color:#2a2a2a;letter-spacing:0.272px;-webkit-text-stroke:0.22px currentColor;">– Binder –</div>
<div class="r" style="left:20px;top:192px;width:205px;height:1px;background:#9a9a9a"></div>
<div class="r" style="left:20px;top:193px;width:205px;height:16px;background:linear-gradient(180deg,#e9ecf0,#d2d6dc)"></div>
<div class="r" style="left:20px;top:208px;width:205px;height:1px;background:#a4a8ae"></div>
<div class="t " style="left:105.5px;top:195.50px;font-family:'Liberation Sans', sans-serif;font-weight:400;font-size:11px;line-height:11px;color:#333;letter-spacing:0.198px;-webkit-text-stroke:0.22px currentColor;">Binder</div>
<svg class="r" style="left:211px;top:196px;" width="12" height="10" viewBox="0 0 12 10"><path d="M1 1.5h10M1 5h10M1 8.5h10" stroke="#555" stroke-width="1.1"/></svg>
<div class="r" style="left:20px;top:209px;width:205px;height:560px;background:linear-gradient(180deg,#e5e8ec 0%,#dde1e7 60%,#d3d8df 100%);border-radius:0 0 0 4px"></div>
<div class="r" style="left:225px;top:91px;width:1px;height:678px;background:#8a8a8a"></div>
<svg class="r" style="left:27px;top:214px;" width="11" height="9" viewBox="0 0 11 9"><path d="M1 1h9l-4.5 7z" fill="#7a7a7a"/></svg>
<svg class="r" style="left:38px;top:209px;" width="20" height="18" viewBox="0 0 20 18"><defs><linearGradient id="gd" x1="0" y1="0" x2="0" y2="1"><stop offset="0" stop-color="#dedede"/><stop offset="1" stop-color="#fbfbfb"/></linearGradient></defs><path d="M1.5 2.2l5-1.2 .5 14.5-2 .3z" fill="#fafafa" stroke="#777" stroke-width=".8" stroke-linejoin="round"/><rect x="6.6" y="1.3" width="10.8" height="15.2" rx="1.2" fill="url(#gd)" stroke="#5a5a5a" stroke-width="1.1"/><path d="M7 13.6h10" stroke="#999" stroke-width=".7"/><path d="M8.8 3v.1M8.8 6v.1M8.8 9v.1M8.8 12v.1" stroke="#444" stroke-width="1" stroke-linecap="round"/><path d="M10 5.3h2.5M13.2 5.3h2M10 7.5h1M11.8 7.5h2.4" stroke="#444" stroke-width=".8"/></svg>
<div class="t " style="left:60.5px;top:212.00px;font-family:'Liberation Sans', sans-serif;font-weight:400;font-size:12px;line-height:12px;color:#111;letter-spacing:0.100px;-webkit-text-stroke:0.22px currentColor;">Draft</div>
<svg class="r" style="left:44px;top:233px;" width="11" height="9" viewBox="0 0 11 9"><path d="M1 1h9l-4.5 7z" fill="#7a7a7a"/></svg>
<svg class="r" style="left:57px;top:228px;" width="14" height="18" viewBox="0 0 14 18"><defs><linearGradient id="gts" x1="0" y1="0" x2="0" y2="1"><stop offset="0" stop-color="#d8d8d8"/><stop offset="1" stop-color="#fbfbfb"/></linearGradient></defs><rect x="1.1" y="4.1" width="9.6" height="12.8" rx="1" fill="#f6f6f6" stroke="#666" stroke-width="1"/><rect x="3.6" y="1.6" width="9.6" height="12.8" rx="1" fill="url(#gts)" stroke="#5e5e5e" stroke-width="1.1"/></svg>
<div class="t " style="left:76px;top:231.00px;font-family:'Liberation Sans', sans-serif;font-weight:400;font-size:12px;line-height:12px;color:#111;letter-spacing:-0.269px;-webkit-text-stroke:0.22px currentColor;">Ten Series</div>
<div class="r" style="left:20px;top:247px;width:205px;height:19px;background:linear-gradient(180deg,#72b5e6 0%,#5aa3dc 50%,#3d88d0 100%);box-shadow:inset 0 1px 0 #5f9fd6"></div>
<svg class="r" style="left:75px;top:249px;" width="11" height="14" viewBox="0 0 11 14"><rect x=".6" y=".6" width="9.8" height="12.8" rx="1.2" fill="#fff" stroke="#333" stroke-width="1.1"/><g fill="#666"><rect x="2.5" y="2.6" width="2.5" height="1"/><rect x="5.6" y="2.6" width="3" height="1"/><rect x="2.5" y="4.6" width="3" height="1"/><rect x="6.2" y="4.6" width="2.4" height="1"/><rect x="2.5" y="6.6" width="1.5" height="1"/><rect x="4.6" y="6.6" width="4" height="1"/><rect x="2.5" y="8.6" width="3" height="1"/><rect x="6.2" y="8.6" width="2.4" height="1"/><rect x="3.5" y="10.6" width="3" height="1"/><rect x="7.2" y="10.6" width="1.4" height="1"/></g></svg>
<div class="t " style="left:92.5px;top:250.00px;font-family:'Liberation Sans', sans-serif;font-weight:700;font-size:12px;line-height:12px;color:#fff;letter-spacing:-0.251px;">Part 7–Why Jesus is…</div>
<svg class="r" style="left:75px;top:268px;" width="11" height="14" viewBox="0 0 11 14"><defs><linearGradient id="dg" x1="0" y1="0" x2="0" y2="1"><stop offset="0" stop-color="#d8d8d8"/><stop offset="1" stop-color="#fbfbfb"/></linearGradient></defs><rect x=".6" y=".6" width="9.8" height="12.8" rx="1.2" fill="url(#dg)" stroke="#6b6b6b" stroke-width="1.1"/></svg>
<div class="t " style="left:92.5px;top:269.00px;font-family:'Liberation Sans', sans-serif;font-weight:400;font-size:12px;line-height:12px;color:#111;letter-spacing:-0.249px;-webkit-text-stroke:0.22px currentColor;">Part 6–When Religion…</div>
<svg class="r" style="left:75px;top:287px;" width="11" height="14" viewBox="0 0 11 14"><defs><linearGradient id="dg" x1="0" y1="0" x2="0" y2="1"><stop offset="0" stop-color="#d8d8d8"/><stop offset="1" stop-color="#fbfbfb"/></linearGradient></defs><rect x=".6" y=".6" width="9.8" height="12.8" rx="1.2" fill="url(#dg)" stroke="#6b6b6b" stroke-width="1.1"/></svg>
<div class="t " style="left:92.5px;top:288.00px;font-family:'Liberation Sans', sans-serif;font-weight:400;font-size:12px;line-height:12px;color:#111;letter-spacing:-0.108px;-webkit-text-stroke:0.22px currentColor;">Part 5–It Should Take…</div>
<svg class="r" style="left:75px;top:306px;" width="11" height="14" viewBox="0 0 11 14"><defs><linearGradient id="dg" x1="0" y1="0" x2="0" y2="1"><stop offset="0" stop-color="#d8d8d8"/><stop offset="1" stop-color="#fbfbfb"/></linearGradient></defs><rect x=".6" y=".6" width="9.8" height="12.8" rx="1.2" fill="url(#dg)" stroke="#6b6b6b" stroke-width="1.1"/></svg>
<div class="t " style="left:92.5px;top:307.00px;font-family:'Liberation Sans', sans-serif;font-weight:400;font-size:12px;line-height:12px;color:#111;letter-spacing:-0.282px;-webkit-text-stroke:0.22px currentColor;">Part 4–Rules of Engag…</div>
<svg class="r" style="left:75px;top:325px;" width="11" height="14" viewBox="0 0 11 14"><defs><linearGradient id="dg" x1="0" y1="0" x2="0" y2="1"><stop offset="0" stop-color="#d8d8d8"/><stop offset="1" stop-color="#fbfbfb"/></linearGradient></defs><rect x=".6" y=".6" width="9.8" height="12.8" rx="1.2" fill="url(#dg)" stroke="#6b6b6b" stroke-width="1.1"/></svg>
<div class="t " style="left:92.5px;top:326.00px;font-family:'Liberation Sans', sans-serif;font-weight:400;font-size:12px;line-height:12px;color:#111;letter-spacing:-0.186px;-webkit-text-stroke:0.22px currentColor;">Part 3–A Promise Out…</div>
<svg class="r" style="left:75px;top:344px;" width="11" height="14" viewBox="0 0 11 14"><defs><linearGradient id="dg" x1="0" y1="0" x2="0" y2="1"><stop offset="0" stop-color="#d8d8d8"/><stop offset="1" stop-color="#fbfbfb"/></linearGradient></defs><rect x=".6" y=".6" width="9.8" height="12.8" rx="1.2" fill="url(#dg)" stroke="#6b6b6b" stroke-width="1.1"/></svg>
<div class="t " style="left:92.5px;top:345.00px;font-family:'Liberation Sans', sans-serif;font-weight:400;font-size:12px;line-height:12px;color:#111;letter-spacing:-0.348px;-webkit-text-stroke:0.22px currentColor;">Part 2–Where Did We…</div>
<svg class="r" style="left:75px;top:363px;" width="11" height="14" viewBox="0 0 11 14"><defs><linearGradient id="dg" x1="0" y1="0" x2="0" y2="1"><stop offset="0" stop-color="#d8d8d8"/><stop offset="1" stop-color="#fbfbfb"/></linearGradient></defs><rect x=".6" y=".6" width="9.8" height="12.8" rx="1.2" fill="url(#dg)" stroke="#6b6b6b" stroke-width="1.1"/></svg>
<div class="t " style="left:92.5px;top:364.00px;font-family:'Liberation Sans', sans-serif;font-weight:400;font-size:12px;line-height:12px;color:#111;letter-spacing:-0.214px;-webkit-text-stroke:0.22px currentColor;">Part 1–And So It Begins</div>
<svg class="r" style="left:58px;top:382px;" width="11" height="14" viewBox="0 0 11 14"><defs><linearGradient id="dg" x1="0" y1="0" x2="0" y2="1"><stop offset="0" stop-color="#d8d8d8"/><stop offset="1" stop-color="#fbfbfb"/></linearGradient></defs><rect x=".6" y=".6" width="9.8" height="12.8" rx="1.2" fill="url(#dg)" stroke="#6b6b6b" stroke-width="1.1"/></svg>
<div class="t " style="left:76px;top:383.00px;font-family:'Liberation Sans', sans-serif;font-weight:400;font-size:12px;line-height:12px;color:#111;letter-spacing:-0.210px;-webkit-text-stroke:0.22px currentColor;">Christmas Series</div>
<svg class="r" style="left:28px;top:405px;" width="11" height="9" viewBox="0 0 11 9"><path d="M1 1h9l-4.5 7z" fill="#7a7a7a"/></svg>
<svg class="r" style="left:40px;top:402px;" width="16" height="13" viewBox="0 0 16 13"><rect x=".7" y=".7" width="14.6" height="11.6" fill="#fbfbfb" stroke="#b24a30" stroke-width="1.3"/><path d="M8 .5v12" stroke="#7a3a22" stroke-width=".9"/><rect x="6" y="1.3" width="2" height="10.4" fill="#e4e4e4"/><g stroke="#8a8a8a" stroke-width=".8"><path d="M2 3h1.6M4.5 3h1.2M2 5h1.2M4.3 5h1.4M2 7h1.6M4.5 7h1.2M2 9h1.2M4.3 9h1.4"/><path d="M9.5 8.5h1.5M12 8.5h2M9.5 10.3h1.2M11.8 10.3h2.2"/></g><rect x="9.3" y="2.2" width="4.8" height="4.3" fill="#2a78c0"/><path d="M9.3 6.5l1.8-1.8 1.3 1 1.7-1.5v2.3z" fill="#222"/></svg>
<div class="t " style="left:60.5px;top:402.00px;font-family:'Liberation Sans', sans-serif;font-weight:400;font-size:12px;line-height:12px;color:#111;letter-spacing:-0.545px;-webkit-text-stroke:0.22px currentColor;">Research</div>
<svg class="r" style="left:58px;top:420px;" width="11" height="14" viewBox="0 0 11 14"><defs><linearGradient id="dg" x1="0" y1="0" x2="0" y2="1"><stop offset="0" stop-color="#d8d8d8"/><stop offset="1" stop-color="#fbfbfb"/></linearGradient></defs><rect x=".6" y=".6" width="9.8" height="12.8" rx="1.2" fill="url(#dg)" stroke="#6b6b6b" stroke-width="1.1"/></svg>
<div class="t " style="left:76px;top:421.00px;font-family:'Liberation Sans', sans-serif;font-weight:400;font-size:12px;line-height:12px;color:#111;letter-spacing:0.038px;-webkit-text-stroke:0.22px currentColor;">Illustrations A–G</div>
<svg class="r" style="left:58px;top:439px;" width="11" height="14" viewBox="0 0 11 14"><defs><linearGradient id="dg" x1="0" y1="0" x2="0" y2="1"><stop offset="0" stop-color="#d8d8d8"/><stop offset="1" stop-color="#fbfbfb"/></linearGradient></defs><rect x=".6" y=".6" width="9.8" height="12.8" rx="1.2" fill="url(#dg)" stroke="#6b6b6b" stroke-width="1.1"/></svg>
<div class="t " style="left:76px;top:440.00px;font-family:'Liberation Sans', sans-serif;font-weight:400;font-size:12px;line-height:12px;color:#111;letter-spacing:0.077px;-webkit-text-stroke:0.22px currentColor;">Illustrations H–Q</div>
<svg class="r" style="left:58px;top:458px;" width="11" height="14" viewBox="0 0 11 14"><defs><linearGradient id="dg" x1="0" y1="0" x2="0" y2="1"><stop offset="0" stop-color="#d8d8d8"/><stop offset="1" stop-color="#fbfbfb"/></linearGradient></defs><rect x=".6" y=".6" width="9.8" height="12.8" rx="1.2" fill="url(#dg)" stroke="#6b6b6b" stroke-width="1.1"/></svg>
<div class="t " style="left:76px;top:459.00px;font-family:'Liberation Sans', sans-serif;font-weight:400;font-size:12px;line-height:12px;color:#111;letter-spacing:-0.011px;-webkit-text-stroke:0.22px currentColor;">Illustrations R–Z</div>
<svg class="r" style="left:58px;top:477px;" width="11" height="14" viewBox="0 0 11 14"><defs><linearGradient id="dg" x1="0" y1="0" x2="0" y2="1"><stop offset="0" stop-color="#d8d8d8"/><stop offset="1" stop-color="#fbfbfb"/></linearGradient></defs><rect x=".6" y=".6" width="9.8" height="12.8" rx="1.2" fill="url(#dg)" stroke="#6b6b6b" stroke-width="1.1"/></svg>
<div class="t " style="left:76px;top:478.00px;font-family:'Liberation Sans', sans-serif;font-weight:400;font-size:12px;line-height:12px;color:#111;letter-spacing:-0.028px;-webkit-text-stroke:0.22px currentColor;">Catalyst 2013</div>
<svg class="r" style="left:58px;top:496px;" width="11" height="14" viewBox="0 0 11 14"><defs><linearGradient id="dg" x1="0" y1="0" x2="0" y2="1"><stop offset="0" stop-color="#d8d8d8"/><stop offset="1" stop-color="#fbfbfb"/></linearGradient></defs><rect x=".6" y=".6" width="9.8" height="12.8" rx="1.2" fill="url(#dg)" stroke="#6b6b6b" stroke-width="1.1"/></svg>
<div class="t " style="left:76px;top:497.00px;font-family:'Liberation Sans', sans-serif;font-weight:400;font-size:12px;line-height:12px;color:#111;letter-spacing:-0.279px;-webkit-text-stroke:0.22px currentColor;">Quotes</div>
<svg class="r" style="left:58px;top:515px;" width="11" height="14" viewBox="0 0 11 14"><defs><linearGradient id="dg" x1="0" y1="0" x2="0" y2="1"><stop offset="0" stop-color="#d8d8d8"/><stop offset="1" stop-color="#fbfbfb"/></linearGradient></defs><rect x=".6" y=".6" width="9.8" height="12.8" rx="1.2" fill="url(#dg)" stroke="#6b6b6b" stroke-width="1.1"/></svg>
<div class="t " style="left:76px;top:516.00px;font-family:'Liberation Sans', sans-serif;font-weight:400;font-size:12px;line-height:12px;color:#111;letter-spacing:-0.128px;-webkit-text-stroke:0.22px currentColor;">Preaching Calendars 2013</div>
<svg class="r" style="left:58px;top:534px;" width="11" height="14" viewBox="0 0 11 14"><defs><linearGradient id="dg" x1="0" y1="0" x2="0" y2="1"><stop offset="0" stop-color="#d8d8d8"/><stop offset="1" stop-color="#fbfbfb"/></linearGradient></defs><rect x=".6" y=".6" width="9.8" height="12.8" rx="1.2" fill="url(#dg)" stroke="#6b6b6b" stroke-width="1.1"/></svg>
<div class="t " style="left:76px;top:535.00px;font-family:'Liberation Sans', sans-serif;font-weight:400;font-size:12px;line-height:12px;color:#111;letter-spacing:-0.128px;-webkit-text-stroke:0.22px currentColor;">Preaching Calendars 2014</div>
<svg class="r" style="left:28px;top:555px;" width="10" height="11" viewBox="0 0 10 11"><path d="M1 1v9.5l7.5-4.75z" fill="#7a7a7a"/></svg>
<svg class="r" style="left:41px;top:551px;" width="14" height="17" viewBox="0 0 14 17"><defs><pattern id="mesh" width="2" height="2" patternUnits="userSpaceOnUse"><rect width="2" height="2" fill="#e6e6e6"/><circle cx="1" cy="1" r=".6" fill="#555"/></pattern></defs><path d="M1.5 3.5h11l-1 12.3c-.2.7-1 1-1.6 1H4c-.6 0-1.4-.3-1.6-1z" fill="url(#mesh)" stroke="#6a6a6a" stroke-width=".9"/><ellipse cx="7" cy="3.5" rx="5.8" ry="2.2" fill="#f4f4f4" stroke="#6a6a6a" stroke-width=".9"/><ellipse cx="7" cy="3.3" rx="4" ry="1" fill="#444"/></svg>
<div class="t " style="left:60.5px;top:554.00px;font-family:'Liberation Sans', sans-serif;font-weight:400;font-size:12px;line-height:12px;color:#111;letter-spacing:-0.247px;-webkit-text-stroke:0.22px currentColor;">Trash</div>
<svg class="r" style="left:29px;top:751px;" width="12" height="12" viewBox="0 0 12 12"><path d="M6 1.5v9M1.5 6h9" stroke="#444" stroke-width="2"/></svg>
<svg class="r" style="left:54px;top:750px;" width="24" height="14" viewBox="0 0 24 14"><path d="M1 3h4l1 1h5v8H1z" fill="#444"/><path d="M17 2.5v9M12.5 7h9" stroke="#444" stroke-width="2"/></svg>
<svg class="r" style="left:88px;top:750px;" width="20" height="14" viewBox="0 0 20 14"><g transform="translate(7,7)"><circle r="3.6" fill="none" stroke="#555" stroke-width="2.4"/><g stroke="#555" stroke-width="1.8"><path d="M0-6v2.2M0 6v-2.2M-6 0h2.2M6 0h-2.2M-4.2-4.2l1.6 1.6M4.2 4.2l-1.6-1.6M-4.2 4.2l1.6-1.6M4.2-4.2l-1.6 1.6"/></g></g><path d="M15 7h3l-1.5 1.5z" fill="#555"/></svg>
<div class="r" style="left:226px;top:91px;width:1037px;height:25px;background:#b4b4b4"></div>
<div class="r" style="left:226px;top:116px;width:1037px;height:1px;background:#7c7c7c"></div>
<div class="r" style="left:234px;top:97px;width:38px;height:14px;border-radius:3px;background:linear-gradient(180deg,#c6c6c6,#b6b6b6);box-shadow:inset 0 0 0 1px #939393,0 1px 0 rgba(255,255,255,.22)"></div>
<div class="t " style="left:242px;top:97.75px;font-family:'Liberation Sans', sans-serif;font-weight:400;font-size:10.5px;line-height:10.5px;color:#8a8a8a;letter-spacing:0.258px;-webkit-text-stroke:0.22px currentColor;">¶a</div>
<div class="r" style="left:246px;top:108px;width:8px;height:1px;background:#8a8a8a"></div>
<svg class="r" style="left:260px;top:101px;" width="8" height="6" viewBox="0 0 8 6"><path d="M1.5 1h5L4 4.5z" fill="#858585"/></svg>
<div class="r" style="left:280px;top:93px;width:1px;height:21px;background:#5e5e5e"></div>
<div class="r" style="left:289px;top:97px;width:104px;height:14px;border-radius:3px;background:linear-gradient(180deg,#c6c6c6,#b6b6b6);box-shadow:inset 0 0 0 1px #939393,0 1px 0 rgba(255,255,255,.22)"></div>
<div class="t " style="left:298.5px;top:98.50px;font-family:'Liberation Sans', sans-serif;font-weight:400;font-size:10px;line-height:10px;color:#858585;letter-spacing:-0.354px;-webkit-text-stroke:0.22px currentColor;">Cochin</div>
<svg class="r" style="left:380px;top:99px;" width="8" height="11" viewBox="0 0 8 11"><path d="M4 1.2l2.3 2.8H1.7zM4 9.8l2.3-2.8H1.7z" fill="#858585"/></svg>
<div class="r" style="left:400px;top:97px;width:70px;height:14px;border-radius:3px;background:linear-gradient(180deg,#c6c6c6,#b6b6b6);box-shadow:inset 0 0 0 1px #939393,0 1px 0 rgba(255,255,255,.22)"></div>
<div class="t " style="left:409.5px;top:98.50px;font-family:'Liberation Sans', sans-serif;font-weight:400;font-size:10px;line-height:10px;color:#858585;letter-spacing:-0.379px;-webkit-text-stroke:0.22px currentColor;">Bold</div>
<svg class="r" style="left:457px;top:99px;" width="8" height="11" viewBox="0 0 8 11"><path d="M4 1.2l2.3 2.8H1.7zM4 9.8l2.3-2.8H1.7z" fill="#858585"/></svg>
<div class="r" style="left:477px;top:97px;width:51px;height:14px;border-radius:3px;background:linear-gradient(180deg,#c6c6c6,#b6b6b6);box-shadow:inset 0 0 0 1px #939393,0 1px 0 rgba(255,255,255,.22)"></div>
<div class="t " style="left:486.5px;top:98.50px;font-family:'Liberation Sans', sans-serif;font-weight:400;font-size:10px;line-height:10px;color:#858585;letter-spacing:-0.062px;-webkit-text-stroke:0.22px currentColor;">14</div>
<svg class="r" style="left:515px;top:99px;" width="8" height="11" viewBox="0 0 8 11"><path d="M4 1.2l2.3 2.8H1.7zM4 9.8l2.3-2.8H1.7z" fill="#858585"/></svg>
<div class="r" style="left:536px;top:93px;width:1px;height:21px;background:#5e5e5e"></div>
<div class="r" style="left:545px;top:97px;width:60px;height:14px;border-radius:3px;background:linear-gradient(180deg,#c6c6c6,#b6b6b6);box-shadow:inset 0 0 0 1px #939393,0 1px 0 rgba(255,255,255,.22)"></div>
<div class="r" style="left:546px;top:98px;width:19px;height:12px;background:linear-gradient(180deg,#aaaaaa,#b4b4b4)"></div>
<div class="r" style="left:565px;top:97px;width:1px;height:14px;background:#939393"></div>
<div class="r" style="left:585px;top:97px;width:1px;height:14px;background:#939393"></div>
<div class="t " style="left:551px;top:97.75px;font-family:'Liberation Serif', serif;font-weight:700;font-size:11.5px;line-height:11.5px;color:#8a8a8a;">B</div>
<div class="t " style="left:572.5px;top:97.75px;font-family:'Liberation Serif', serif;font-weight:400;font-size:11.5px;line-height:11.5px;color:#8a8a8a;font-style:italic">I</div>
<div class="t " style="left:591px;top:97.75px;font-family:'Liberation Serif', serif;font-weight:400;font-size:11.5px;line-height:11.5px;color:#8a8a8a;text-decoration:underline">U</div>
<div class="r" style="left:623px;top:97px;width:81px;height:14px;border-radius:3px;background:linear-gradient(180deg,#c6c6c6,#b6b6b6);box-shadow:inset 0 0 0 1px #939393,0 1px 0 rgba(255,255,255,.22)"></div>
<div class="r" style="left:643px;top:97px;width:1px;height:14px;background:#939393"></div>
<div class="r" style="left:663px;top:97px;width:1px;height:14px;background:#939393"></div>
<div class="r" style="left:683px;top:97px;width:1px;height:14px;background:#939393"></div>
<div class="r" style="left:624px;top:98px;width:19px;height:12px;background:linear-gradient(180deg,#aaaaaa,#b4b4b4)"></div>
<div class="r" style="left:614px;top:93px;width:1px;height:21px;background:#5e5e5e"></div>
<svg class="r" style="left:628px;top:99px;" width="11" height="10" viewBox="0 0 11 10"><path d="M0 .5h11M0 2.5h8M0 4.5h11M0 6.5h8M0 8.5h11" stroke="#6e6e6e" stroke-width="1"/></svg>
<svg class="r" style="left:648px;top:99px;" width="11" height="10" viewBox="0 0 11 10"><path d="M0 .5h11M1.5 2.5h8M0 4.5h11M1.5 6.5h8M0 8.5h11" stroke="#6e6e6e" stroke-width="1"/></svg>
<svg class="r" style="left:668px;top:99px;" width="11" height="10" viewBox="0 0 11 10"><path d="M0 .5h11M3 2.5h8M0 4.5h11M3 6.5h8M0 8.5h11" stroke="#6e6e6e" stroke-width="1"/></svg>
<svg class="r" style="left:688px;top:99px;" width="11" height="10" viewBox="0 0 11 10"><path d="M0 .5h11M0 2.5h11M0 4.5h11M0 6.5h11M0 8.5h11" stroke="#6e6e6e" stroke-width="1"/></svg>
<div class="r" style="left:712px;top:93px;width:1px;height:21px;background:#5e5e5e"></div>
<div class="r" style="left:721px;top:97px;width:34px;height:14px;border-radius:1px;background:#e9e9e9;box-shadow:inset 0 0 0 1px #8c8c8c,inset 0 0 0 2px #fafafa"></div>
<div class="r" style="left:724px;top:99px;width:22px;height:10px;background:#f2f2f2;box-shadow:inset 0 0 0 1px #d0d0d0"></div>
<svg class="r" style="left:747px;top:101px;" width="7" height="6" viewBox="0 0 7 6"><path d="M.5 1h6l-3 4z" fill="#222"/></svg>
<div class="r" style="left:762px;top:97px;width:35px;height:14px;border-radius:1px;background:#e9e9e9;box-shadow:inset 0 0 0 1px #8c8c8c,inset 0 0 0 2px #fafafa"></div>
<div class="t " style="left:772.5px;top:97.50px;font-family:'Liberation Serif', serif;font-weight:400;font-size:11px;line-height:11px;color:#7a7a7a;letter-spacing:-0.250px;">abc</div>
<svg class="r" style="left:788px;top:101px;" width="7" height="6" viewBox="0 0 7 6"><path d="M.5 1h6l-3 4z" fill="#222"/></svg>
<div class="r" style="left:806px;top:93px;width:1px;height:21px;background:#5e5e5e"></div>
<svg class="r" style="left:813px;top:96px;" width="11" height="16" viewBox="0 0 11 16"><path d="M1 1.5h9M1 14.5h9" stroke="#222" stroke-width="1.3"/><path d="M5.5 4v8" stroke="#222" stroke-width="1.4"/><path d="M3 5.5L5.5 3 8 5.5zM3 10.5L5.5 13 8 10.5z" fill="#222"/></svg>
<div class="r" style="left:827px;top:97px;width:51px;height:14px;border-radius:3px;background:linear-gradient(180deg,#c6c6c6,#b6b6b6);box-shadow:inset 0 0 0 1px #939393,0 1px 0 rgba(255,255,255,.22)"></div>
<div class="t " style="left:836.5px;top:98.50px;font-family:'Liberation Sans', sans-serif;font-weight:400;font-size:10px;line-height:10px;color:#858585;letter-spacing:-0.135px;-webkit-text-stroke:0.22px currentColor;">1.2</div>
<svg class="r" style="left:865px;top:99px;" width="8" height="11" viewBox="0 0 8 11"><path d="M4 1.2l2.3 2.8H1.7zM4 9.8l2.3-2.8H1.7z" fill="#858585"/></svg>
<div class="r" style="left:885px;top:97px;width:40px;height:14px;border-radius:3px;background:linear-gradient(180deg,#c6c6c6,#b6b6b6);box-shadow:inset 0 0 0 1px #939393,0 1px 0 rgba(255,255,255,.22)"></div>
<svg class="r" style="left:892px;top:98px;" width="16" height="12" viewBox="0 0 16 12"><path d="M5 2h10M5 5h10M5 8h10" stroke="#5a5a5a" stroke-width="1.1"/><path d="M2.5 .5v11" stroke="#5a5a5a" stroke-width="1.1" stroke-dasharray="1 1"/></svg>
<svg class="r" style="left:914px;top:101px;" width="7" height="6" viewBox="0 0 7 6"><path d="M1 1h5L3.5 4.5z" fill="#858585"/></svg>
<div class="r" style="left:226px;top:117px;width:809px;height:22px;background:linear-gradient(180deg,#e9e9e9,#d2d2d2)"></div>
<div class="r" style="left:226px;top:139px;width:809px;height:1px;background:#8c8c8c"></div>
<svg class="r" style="left:235px;top:122px;" width="11" height="11" viewBox="0 0 11 11"><path d="M1 5.5L10 1v9z" fill="#333"/></svg>
<div class="r" style="left:254px;top:120px;width:1px;height:16px;background:#b0b0b0"></div>
<svg class="r" style="left:264px;top:122px;" width="11" height="11" viewBox="0 0 11 11"><path d="M10 5.5L1 1v9z" fill="#c4c4c4"/></svg>
<div class="r" style="left:283px;top:120px;width:1px;height:16px;background:#b0b0b0"></div>
<svg class="r" style="left:293px;top:121px;" width="11" height="14" viewBox="0 0 11 14"><rect x=".6" y=".6" width="9.8" height="12.8" rx="1.2" fill="#fff" stroke="#333" stroke-width="1.1"/><g fill="#666"><rect x="2.5" y="2.6" width="2.5" height="1"/><rect x="5.6" y="2.6" width="3" height="1"/><rect x="2.5" y="4.6" width="3" height="1"/><rect x="6.2" y="4.6" width="2.4" height="1"/><rect x="2.5" y="6.6" width="1.5" height="1"/><rect x="4.6" y="6.6" width="4" height="1"/><rect x="2.5" y="8.6" width="3" height="1"/><rect x="6.2" y="8.6" width="2.4" height="1"/><rect x="3.5" y="10.6" width="3" height="1"/><rect x="7.2" y="10.6" width="1.4" height="1"/></g></svg>
<div class="t " style="left:312px;top:122.00px;font-family:'Liberation Mono', monospace;font-weight:400;font-size:13px;line-height:13px;color:#111;-webkit-text-stroke:0.4px #111;">Part 7-Why Jesus is Better Tha the Rest</div>
<svg class="r" style="left:980px;top:121px;" width="13" height="14" viewBox="0 0 13 14"><path d="M6.5 1L12 6.5H9v6H4v-6H1z" fill="#fff" stroke="#555" stroke-width="1"/></svg>
<svg class="r" style="left:996px;top:121px;" width="14" height="14" viewBox="0 0 14 14"><path d="M7 13L12.5 7.5H9.5v-6h-5v6h-3z" fill="#fff" stroke="#555" stroke-width="1"/></svg>
<svg class="r" style="left:1017px;top:122px;" width="13" height="12" viewBox="0 0 13 12"><rect x="1" y="1" width="11" height="10" fill="#ddd" stroke="#555" stroke-width="1.6"/><path d="M1 6h11" stroke="#555" stroke-width="1.3"/></svg>
<div class="r" style="left:226px;top:140px;width:809px;height:606px;background:#fff"></div>
<div class="r" style="left:1020px;top:140px;width:15px;height:606px;background:linear-gradient(90deg,#ececec,#fafafa 40%,#f4f4f4);box-shadow:inset 1px 0 0 #e0e0e0"></div>
<div class="r" style="left:1024px;top:143px;width:8px;height:510px;background:#c4c4c4;border-radius:4px"></div>
<svg class="r" style="left:269px;top:169px;" width="7" height="7" viewBox="0 0 7 7"><circle cx="3.3" cy="3.6" r="2.6" fill="#000"/></svg>
<div class="t " style="left:287.5px;top:164.75px;font-family:'Liberation Serif', serif;font-weight:400;font-size:14.5px;line-height:14.5px;color:#000;letter-spacing:-0.017px;">But even though we do not know much about her, she figures prominently in the crucifixion and the resurrection stories</div>
<svg class="r" style="left:269px;top:189px;" width="7" height="7" viewBox="0 0 7 7"><circle cx="3.3" cy="3.6" r="2.6" fill="#000"/></svg>
<div class="t " style="left:287.5px;top:184.75px;font-family:'Liberation Serif', serif;font-weight:400;font-size:14.5px;line-height:14.5px;color:#000;letter-spacing:0.034px;">Her love for Jesus is evident, and if you read this passage in John, the most common title she uses for Jesus is LORD!</div>
<svg class="r" style="left:269px;top:210px;" width="7" height="7" viewBox="0 0 7 7"><circle cx="3.3" cy="3.6" r="2.6" fill="#000"/></svg>
<div class="t " style="left:287.5px;top:205.75px;font-family:'Liberation Serif', serif;font-weight:400;font-size:14.5px;line-height:14.5px;color:#000;letter-spacing:-0.100px;">As she is crying, two angels ask her why she is crying</div>
<svg class="r" style="left:269px;top:250px;" width="7" height="7" viewBox="0 0 7 7"><circle cx="3.3" cy="3.6" r="2.6" fill="#000"/></svg>
<div class="t " style="left:287.5px;top:245.75px;font-family:'Liberation Serif', serif;font-weight:400;font-size:14.5px;line-height:14.5px;color:#000;letter-spacing:0.006px;">Jesus shows up and she does not recognize him at first – here is what happens next</div>
<div class="r" style="left:269px;top:282px;width:101px;height:21px;background:#e6f87c"></div>
<div class="t " style="left:269px;top:286.75px;font-family:'Liberation Serif', serif;font-weight:400;font-size:14.5px;line-height:14.5px;color:#000;letter-spacing:0.656px;">POWERPOINT</div>
<div class="t " style="left:269px;top:308.50px;font-family:'Liberation Serif', serif;font-weight:700;font-size:14px;line-height:14px;color:#000;letter-spacing:-0.077px;">&quot;Mary!&quot; Jesus said. She turned to him and cried out, &quot;Rabboni!&quot; (which is Hebrew for &quot;Teacher&quot;). 17 &quot;Don&#x27;t cling to</div>
<svg class="r" style="left:594px;top:320.5px;" width="54" height="3" viewBox="0 0 54 3"><circle cx="1.20" cy="1.5" r="1.05" fill="#f04a4a"/><circle cx="5.25" cy="1.5" r="1.05" fill="#f04a4a"/><circle cx="9.30" cy="1.5" r="1.05" fill="#f04a4a"/><circle cx="13.35" cy="1.5" r="1.05" fill="#f04a4a"/><circle cx="17.40" cy="1.5" r="1.05" fill="#f04a4a"/><circle cx="21.45" cy="1.5" r="1.05" fill="#f04a4a"/><circle cx="25.50" cy="1.5" r="1.05" fill="#f04a4a"/><circle cx="29.55" cy="1.5" r="1.05" fill="#f04a4a"/><circle cx="33.60" cy="1.5" r="1.05" fill="#f04a4a"/><circle cx="37.65" cy="1.5" r="1.05" fill="#f04a4a"/><circle cx="41.70" cy="1.5" r="1.05" fill="#f04a4a"/><circle cx="45.75" cy="1.5" r="1.05" fill="#f04a4a"/><circle cx="49.80" cy="1.5" r="1.05" fill="#f04a4a"/></svg>
<div class="t " style="left:251px;top:328.50px;font-family:'Liberation Serif', serif;font-weight:700;font-size:14px;line-height:14px;color:#000;letter-spacing:0.047px;">me,&quot; Jesus said, &quot;for I haven&#x27;t yet ascended to the Father. But go find my brothers and tell them, &#x27;I am ascending to my</div>
<div class="t " style="left:251px;top:348.50px;font-family:'Liberation Serif', serif;font-weight:700;font-size:14px;line-height:14px;color:#000;letter-spacing:0.038px;">Father and your Father, to my God and your God.&#x27;&quot; 18 Mary Magdalene found the disciples and told them, &quot;I have seen</div>
<div class="t " style="left:251px;top:369.50px;font-family:'Liberation Serif', serif;font-weight:700;font-size:14px;line-height:14px;color:#000;letter-spacing:0.066px;">the Lord!&quot; Then she gave them his message. (Joh 20:16 NLT)</div>
<svg class="r" style="left:269px;top:414px;" width="7" height="7" viewBox="0 0 7 7"><circle cx="3.3" cy="3.6" r="2.6" fill="#000"/></svg>
<div class="t " style="left:287.5px;top:409.75px;font-family:'Liberation Serif', serif;font-weight:400;font-size:14.5px;line-height:14.5px;color:#000;letter-spacing:-0.033px;">Jesus is basically telling her that they will have time together</div>
<svg class="r" style="left:269px;top:434px;" width="7" height="7" viewBox="0 0 7 7"><circle cx="3.3" cy="3.6" r="2.6" fill="#000"/></svg>
<div class="t " style="left:287.5px;top:429.75px;font-family:'Liberation Serif', serif;font-weight:400;font-size:14.5px;line-height:14.5px;color:#000;letter-spacing:-0.042px;">She becomes the primary messenger of the resurrection</div>
<svg class="r" style="left:269px;top:454px;" width="7" height="7" viewBox="0 0 7 7"><circle cx="3.3" cy="3.6" r="2.6" fill="#000"/></svg>
<div class="t " style="left:287.5px;top:449.75px;font-family:'Liberation Serif', serif;font-weight:400;font-size:14.5px;line-height:14.5px;color:#000;letter-spacing:-0.078px;">A woman, whom in those days was not considered a viable witness</div>
<div class="r" style="left:269px;top:486px;width:692px;height:21px;background:#fcd28a"></div>
<div class="t " style="left:269px;top:490.75px;font-family:'Liberation Serif', serif;font-weight:400;font-size:14.5px;line-height:14.5px;color:#000;letter-spacing:-0.009px;">But there&#x27;s a difference between believing that Jesus was raised from the grave and believing that it applies to your life.</div>
<svg class="r" style="left:269px;top:536px;" width="7" height="7" viewBox="0 0 7 7"><circle cx="3.3" cy="3.6" r="2.6" fill="#000"/></svg>
<div class="t " style="left:287.5px;top:531.75px;font-family:'Liberation Serif', serif;font-weight:400;font-size:14.5px;line-height:14.5px;color:#000;letter-spacing:-0.021px;">Imagine, what this must of done for Mary?</div>
<svg class="r" style="left:269px;top:556px;" width="7" height="7" viewBox="0 0 7 7"><circle cx="3.3" cy="3.6" r="2.6" fill="#000"/></svg>
<div class="t " style="left:287.5px;top:551.75px;font-family:'Liberation Serif', serif;font-weight:400;font-size:14.5px;line-height:14.5px;color:#000;letter-spacing:-0.045px;">No one could ever take this experience away from her</div>
<svg class="r" style="left:269px;top:577px;" width="7" height="7" viewBox="0 0 7 7"><circle cx="3.3" cy="3.6" r="2.6" fill="#000"/></svg>
<div class="t " style="left:287.5px;top:572.75px;font-family:'Liberation Serif', serif;font-weight:400;font-size:14.5px;line-height:14.5px;color:#000;letter-spacing:-0.048px;">No one could ever say, you don’t matter, or your word isn’t important here</div>
<svg class="r" style="left:269px;top:597px;" width="7" height="7" viewBox="0 0 7 7"><circle cx="3.3" cy="3.6" r="2.6" fill="#000"/></svg>
<div class="t " style="left:287.5px;top:592.75px;font-family:'Liberation Serif', serif;font-weight:400;font-size:14.5px;line-height:14.5px;color:#000;">No one could ever put her down or take her dignity away from her</div>
<svg class="r" style="left:269px;top:618px;" width="7" height="7" viewBox="0 0 7 7"><circle cx="3.3" cy="3.6" r="2.6" fill="#000"/></svg>
<div class="t " style="left:287.5px;top:613.75px;font-family:'Liberation Serif', serif;font-weight:400;font-size:14.5px;line-height:14.5px;color:#000;letter-spacing:-0.064px;">She was a primary witness to the most significant event in the world.</div>
<div class="r" style="left:269px;top:650px;width:420px;height:20px;background:#8ef78e"></div>
<div class="t " style="left:269px;top:653.75px;font-family:'Liberation Serif', serif;font-weight:400;font-size:14.5px;line-height:14.5px;color:#000;letter-spacing:0.422px;">VERSES 19-23 IS THE STORY OF THE DISCIPLES AND JESUS</div>
<svg class="r" style="left:269px;top:679px;" width="7" height="7" viewBox="0 0 7 7"><circle cx="3.3" cy="3.6" r="2.6" fill="#000"/></svg>
<div class="t " style="left:287.5px;top:674.75px;font-family:'Liberation Serif', serif;font-weight:400;font-size:14.5px;line-height:14.5px;color:#000;letter-spacing:0.023px;">They are huddled and afraid, fearing what the Jews may do to them</div>
<svg class="r" style="left:269px;top:699px;" width="7" height="7" viewBox="0 0 7 7"><circle cx="3.3" cy="3.6" r="2.6" fill="#000"/></svg>
<div class="t " style="left:287.5px;top:694.75px;font-family:'Liberation Serif', serif;font-weight:400;font-size:14.5px;line-height:14.5px;color:#000;letter-spacing:-0.032px;">They had invested heavily in Jesus, and committed their lives to him and to his teachings</div>
<svg class="r" style="left:269px;top:720px;" width="7" height="7" viewBox="0 0 7 7"><circle cx="3.3" cy="3.6" r="2.6" fill="#000"/></svg>
<div class="t " style="left:287.5px;top:715.75px;font-family:'Liberation Serif', serif;font-weight:400;font-size:14.5px;line-height:14.5px;color:#000;letter-spacing:-0.026px;">Not only must they be doubting what the last few years meant, now they were in fear for their lives</div>
<svg class="r" style="left:269px;top:740px;" width="7" height="7" viewBox="0 0 7 7"><circle cx="3.3" cy="3.6" r="2.6" fill="#000"/></svg>
<div class="t " style="left:287.5px;top:735.75px;font-family:'Liberation Serif', serif;font-weight:400;font-size:14.5px;line-height:14.5px;color:#000;letter-spacing:0.059px;">And its here that Jesus suddenly showed up</div>
<div class="r" style="left:226px;top:746px;width:1037px;height:1px;background:#9c9c9c"></div>
<div class="r" style="left:226px;top:747px;width:1037px;height:22px;background:linear-gradient(180deg,#f2f2f2,#dadada 60%,#d0d0d0);border-radius:0 0 4px 0"></div>
<div class="t " style="left:234.2px;top:752.50px;font-family:'Liberation Sans', sans-serif;font-weight:400;font-size:11px;line-height:11px;color:#222;letter-spacing:-0.289px;-webkit-text-stroke:0.22px currentColor;">100%</div>
<svg class="r" style="left:274px;top:750px;" width="10" height="16" viewBox="0 0 10 16"><path d="M4.5 1.8l2.7 3.6H1.8zM4.5 14.2l2.7-3.6H1.8z" fill="#111"/></svg>
<div class="r" style="left:287px;top:747px;width:1px;height:22px;background:#a8a8a8"></div>
<div class="t " style="left:561px;top:752.50px;font-family:'Liberation Sans', sans-serif;font-weight:400;font-size:11px;line-height:11px;color:#333;letter-spacing:0.442px;-webkit-text-stroke:0.22px currentColor;">Words: 351</div>
<div class="t " style="left:636px;top:752.50px;font-family:'Liberation Sans', sans-serif;font-weight:400;font-size:11px;line-height:11px;color:#333;letter-spacing:0.497px;-webkit-text-stroke:0.22px currentColor;">Chars: 1,908</div>
<svg class="r" style="left:1006px;top:751px;" width="14" height="14" viewBox="0 0 14 14"><circle cx="7" cy="7" r="5.8" fill="none" stroke="#8a8a8a" stroke-width="1"/><circle cx="7" cy="7" r="3.8" fill="none" stroke="#8a8a8a" stroke-width="1"/><circle cx="7" cy="7" r="1.8" fill="none" stroke="#8a8a8a" stroke-width="1"/></svg>
<div class="r" style="left:1035px;top:117px;width:1px;height:652px;background:#8a8a8a"></div>
<div class="r" style="left:1036px;top:117px;width:227px;height:16px;background:linear-gradient(180deg,#f0f0f0,#dedede 50%,#cfcfcf)"></div>
<div class="r" style="left:1036px;top:133px;width:227px;height:1px;background:#9a9a9a"></div>
<svg class="r" style="left:1040px;top:121px;" width="11" height="10" viewBox="0 0 11 10"><path d="M1 1h9l-4.5 7.5z" fill="#7a7a7a"/></svg>
<div class="t " style="left:1061px;top:120.00px;font-family:'Liberation Sans', sans-serif;font-weight:400;font-size:12px;line-height:12px;color:#222;letter-spacing:-0.211px;-webkit-text-stroke:0.22px currentColor;">Synopsis</div>
<svg class="r" style="left:1211px;top:119px;" width="14" height="11" viewBox="0 0 14 11"><rect x=".5" y=".5" width="13" height="10" rx="1.5" fill="#fbfbfb" stroke="#888"/><path d="M1 3.5h12" stroke="#e07a7a" stroke-width=".8"/><path d="M1 5.8h12M1 8h12" stroke="#7ea6dc" stroke-width=".8"/></svg>
<svg class="r" style="left:1233px;top:119px;" width="8" height="12" viewBox="0 0 8 12"><path d="M4 1l3 3.5H1zM4 11l3-3.5H1z" fill="#111"/></svg>
<div class="r" style="left:1244px;top:117px;width:1px;height:16px;background:#a8a8a8"></div>
<svg class="r" style="left:1246px;top:119px;" width="14" height="12" viewBox="0 0 14 12"><rect x="1" y="1" width="12" height="10" fill="none" stroke="#555" stroke-width="1.1"/><path d="M3 3h3M3 5h2M8 6l3 3M11 7v2h-2" stroke="#555" stroke-width=".9" fill="none"/></svg>
<div class="r" style="left:1036px;top:134px;width:227px;height:136px;background:#fff"></div>
<div class="r" style="left:1036px;top:154px;width:227px;height:1px;background:#c8c8c8"></div>
<div class="r" style="left:1036px;top:169px;width:227px;height:1px;background:#e4e4e4"></div>
<div class="r" style="left:1036px;top:183px;width:227px;height:1px;background:#e4e4e4"></div>
<div class="r" style="left:1036px;top:197px;width:227px;height:1px;background:#e4e4e4"></div>
<div class="r" style="left:1036px;top:211px;width:227px;height:1px;background:#e4e4e4"></div>
<div class="r" style="left:1036px;top:225px;width:227px;height:1px;background:#e4e4e4"></div>
<div class="r" style="left:1036px;top:239px;width:227px;height:1px;background:#e4e4e4"></div>
<div class="r" style="left:1036px;top:253px;width:227px;height:1px;background:#e4e4e4"></div>
<div class="r" style="left:1036px;top:267px;width:227px;height:1px;background:#e4e4e4"></div>
<div class="t " style="left:1041px;top:138.00px;font-family:'Liberation Mono', monospace;font-weight:400;font-size:13px;line-height:13px;color:#111;letter-spacing:0.603px;-webkit-text-stroke:0.3px #111;">Part 7-Why Jesus is Bett…</div>
<div class="t " style="left:1041px;top:160.50px;font-family:'Liberation Mono', monospace;font-weight:400;font-size:11px;line-height:11px;color:#111;letter-spacing:0.618px;-webkit-text-stroke:0.3px #111;">A look at the story of the</div>
<div class="t " style="left:1041px;top:174.50px;font-family:'Liberation Mono', monospace;font-weight:400;font-size:11px;line-height:11px;color:#111;letter-spacing:0.621px;-webkit-text-stroke:0.3px #111;">Resurrection as presented in</div>
<div class="t " style="left:1041px;top:188.50px;font-family:'Liberation Mono', monospace;font-weight:400;font-size:11px;line-height:11px;color:#111;letter-spacing:0.606px;-webkit-text-stroke:0.3px #111;">John 20.</div>
<div class="r" style="left:1036px;top:270px;width:227px;height:1px;background:#8a8a8a"></div>
<div class="r" style="left:1036px;top:271px;width:227px;height:16px;background:linear-gradient(180deg,#f0f0f0,#dedede 50%,#cfcfcf)"></div>
<div class="r" style="left:1036px;top:287px;width:227px;height:1px;background:#a0a0a0"></div>
<svg class="r" style="left:1040px;top:275px;" width="11" height="10" viewBox="0 0 11 10"><path d="M1 1h9l-4.5 7.5z" fill="#7a7a7a"/></svg>
<div class="t " style="left:1061px;top:273.00px;font-family:'Liberation Sans', sans-serif;font-weight:400;font-size:12px;line-height:12px;color:#222;letter-spacing:-0.241px;-webkit-text-stroke:0.22px currentColor;">General</div>
<div class="r" style="left:1036px;top:288px;width:227px;height:123px;background:#e9e9e9"></div>
<div class="t " style="left:1045px;top:295.00px;font-family:'Liberation Sans', sans-serif;font-weight:400;font-size:12px;line-height:12px;color:#222;letter-spacing:-0.281px;-webkit-text-stroke:0.22px currentColor;">Label:</div>
<div class="t " style="left:1045px;top:318.00px;font-family:'Liberation Sans', sans-serif;font-weight:400;font-size:12px;line-height:12px;color:#222;letter-spacing:-0.190px;-webkit-text-stroke:0.22px currentColor;">Status:</div>
<div class="r" style="left:1121px;top:293px;width:134px;height:17px;border-radius:4px;background:linear-gradient(180deg,#ffffff,#f2f2f2 50%,#e6e6e6);box-shadow:0 0 0 1px #a6a6a6,0 1px 1px rgba(0,0,0,.15)"></div>
<div class="t " style="left:1129px;top:296.00px;font-family:'Liberation Sans', sans-serif;font-weight:400;font-size:12px;line-height:12px;color:#111;letter-spacing:-0.129px;-webkit-text-stroke:0.22px currentColor;">No Label</div>
<svg class="r" style="left:1243px;top:296px;" width="7" height="11" viewBox="0 0 7 11"><path d="M3.5 1l2.5 3H1zM3.5 10l2.5-3H1z" fill="#333"/></svg>
<div class="r" style="left:1121px;top:316px;width:134px;height:17px;border-radius:4px;background:linear-gradient(180deg,#ffffff,#f2f2f2 50%,#e6e6e6);box-shadow:0 0 0 1px #a6a6a6,0 1px 1px rgba(0,0,0,.15)"></div>
<div class="t " style="left:1129px;top:319.00px;font-family:'Liberation Sans', sans-serif;font-weight:400;font-size:12px;line-height:12px;color:#111;letter-spacing:-0.075px;-webkit-text-stroke:0.22px currentColor;">No Status</div>
<svg class="r" style="left:1243px;top:319px;" width="7" height="11" viewBox="0 0 7 11"><path d="M3.5 1l2.5 3H1zM3.5 10l2.5-3H1z" fill="#333"/></svg>
<div class="t " style="left:1045px;top:340.00px;font-family:'Liberation Sans', sans-serif;font-weight:400;font-size:12px;line-height:12px;color:#222;letter-spacing:0.035px;-webkit-text-stroke:0.22px currentColor;">Modified:</div>
<svg class="r" style="left:1103px;top:339px;" width="8" height="12" viewBox="0 0 8 12"><path d="M4 1l3 4H1zM4 11l3-4H1z" fill="#222"/></svg>
<div class="t " style="left:1126.5px;top:340.00px;font-family:'Liberation Sans', sans-serif;font-weight:400;font-size:12px;line-height:12px;color:#111;letter-spacing:0.136px;-webkit-text-stroke:0.22px currentColor;">Oct 26, 2013, 10:32 AM</div>
<div class="t " style="left:1045px;top:358.00px;font-family:'Liberation Sans', sans-serif;font-weight:400;font-size:12px;line-height:12px;color:#222;letter-spacing:0.016px;-webkit-text-stroke:0.22px currentColor;">Include in Compile</div>
<div class="t " style="left:1045px;top:376.00px;font-family:'Liberation Sans', sans-serif;font-weight:400;font-size:12px;line-height:12px;color:#222;letter-spacing:-0.374px;-webkit-text-stroke:0.22px currentColor;">Page Break Before</div>
<div class="t " style="left:1045px;top:394.00px;font-family:'Liberation Sans', sans-serif;font-weight:400;font-size:12px;line-height:12px;color:#222;letter-spacing:-0.131px;-webkit-text-stroke:0.22px currentColor;">Compile As–Is</div>
<div class="r" style="left:1242px;top:358px;width:12px;height:12px;border-radius:3px;background:linear-gradient(180deg,#d6e8fb,#9cc7f0);box-shadow:inset 0 0 0 1px #5a7ca8"></div>
<svg class="r" style="left:1242px;top:354px;" width="14" height="16" viewBox="0 0 14 16"><path d="M2.5 9.5l3 3.5L12.5 2" stroke="#0d1f40" stroke-width="2.2" fill="none"/></svg>
<div class="r" style="left:1242px;top:376px;width:12px;height:12px;border-radius:3px;background:linear-gradient(180deg,#fefefe,#ececec);box-shadow:inset 0 0 0 1px #8e8e8e"></div>
<div class="r" style="left:1242px;top:395px;width:12px;height:12px;border-radius:3px;background:linear-gradient(180deg,#fefefe,#ececec);box-shadow:inset 0 0 0 1px #8e8e8e"></div>
<div class="r" style="left:1036px;top:411px;width:227px;height:1px;background:#9a9a9a"></div>
<div class="r" style="left:1036px;top:412px;width:227px;height:16px;background:linear-gradient(180deg,#f0f0f0,#dedede 50%,#cfcfcf)"></div>
<div class="r" style="left:1036px;top:428px;width:227px;height:1px;background:#a0a0a0"></div>
<div class="t " style="left:1045px;top:414.50px;font-family:'Liberation Sans', sans-serif;font-weight:400;font-size:12px;line-height:12px;color:#222;letter-spacing:-0.097px;-webkit-text-stroke:0.22px currentColor;">Document Notes</div>
<svg class="r" style="left:1252px;top:414px;" width="8" height="12" viewBox="0 0 8 12"><path d="M4 1l3 4H1zM4 11l3-4H1z" fill="#222"/></svg>
<div class="r" style="left:1036px;top:429px;width:217px;height:317px;background:#fcf6c8"></div>
<div class="r" style="left:1253px;top:429px;width:10px;height:317px;background:linear-gradient(90deg,#f2f2f2,#fafafa)"></div>
<div class="t " style="left:1041px;top:433.00px;font-family:'Liberation Sans', sans-serif;font-weight:400;font-size:12px;line-height:12px;color:#111;-webkit-text-stroke:0.22px currentColor;">Tie in this message to the overall</div>
<div class="t " style="left:1041px;top:447.00px;font-family:'Liberation Sans', sans-serif;font-weight:400;font-size:12px;line-height:12px;color:#111;-webkit-text-stroke:0.22px currentColor;">theme of the series and the</div>
<div class="t " style="left:1041px;top:461.00px;font-family:'Liberation Sans', sans-serif;font-weight:400;font-size:12px;line-height:12px;color:#111;-webkit-text-stroke:0.22px currentColor;">importance of the Resurrection to the</div>
<div class="t " style="left:1041px;top:475.00px;font-family:'Liberation Sans', sans-serif;font-weight:400;font-size:12px;line-height:12px;color:#111;-webkit-text-stroke:0.22px currentColor;">Christian faith.</div>
<div class="r" style="left:1051px;top:747px;width:31px;height:22px;background:linear-gradient(180deg,#c8c8c8,#b8b8b8)"></div>
<div class="r" style="left:1051px;top:747px;width:1px;height:22px;background:#a4a4a4"></div>
<div class="r" style="left:1082px;top:747px;width:1px;height:22px;background:#a4a4a4"></div>
<div class="r" style="left:1111px;top:747px;width:1px;height:22px;background:#a4a4a4"></div>
<div class="r" style="left:1141px;top:747px;width:1px;height:22px;background:#a4a4a4"></div>
<div class="r" style="left:1171px;top:747px;width:1px;height:22px;background:#a4a4a4"></div>
<div class="r" style="left:1201px;top:747px;width:1px;height:22px;background:#a4a4a4"></div>
<div class="r" style="left:1231px;top:747px;width:1px;height:22px;background:#a4a4a4"></div>
<svg class="r" style="left:1039px;top:751px;" width="10" height="14" viewBox="0 0 10 14"><path d="M1.5 1v12M5 1v12M8.5 1v12" stroke="#555" stroke-width="1"/></svg>
<svg class="r" style="left:1058px;top:748px;" width="24" height="19" viewBox="0 0 24 19"><rect x="2" y="2.5" width="13" height="15.5" rx=".8" fill="#d6d6d6" stroke="#4a4a4a" stroke-width="1"/><path d="M3.5 5.5h10M3.5 7.5h10M3.5 9.5h10M3.5 11.5h10M3.5 13.5h10M3.5 15.5h10" stroke="#8a8a8a" stroke-width=".7"/><path d="M3 1.5v2.2M5 1.5v2.2M7 1.5v2.2M9 1.5v2.2M11 1.5v2.2M13 1.5v2.2" stroke="#333" stroke-width=".9"/><path d="M20 2v6M17.2 3.5l5.6 3M17.2 6.5l5.6-3" stroke="#222" stroke-width="1.2"/></svg>
<svg class="r" style="left:1085px;top:748px;" width="21" height="19" viewBox="0 0 21 19"><path d="M1.5 17.5L7 2.5l2 .7-5.5 15z" fill="#ddd" stroke="#333" stroke-width=".9"/><rect x="9" y="2" width="3.5" height="15.5" fill="#444" stroke="#222" stroke-width=".6"/><rect x="12.8" y="1" width="3.5" height="16.5" fill="#222"/><rect x="16.5" y="2" width="3" height="15.5" fill="#555" stroke="#222" stroke-width=".6"/><path d="M9 5h10.5M9 14h10.5" stroke="#bbb" stroke-width=".8"/><path d="M1 18h19" stroke="#888" stroke-width=".8"/></svg>
<svg class="r" style="left:1116px;top:751px;" width="22" height="12" viewBox="0 0 22 12"><ellipse cx="5" cy="6" rx="3.8" ry="4.5" fill="none" stroke="#333" stroke-width="1.6"/><path d="M9 6h12M14 6v4M17 6v4M20 6v4" stroke="#333" stroke-width="1.8"/></svg>
<svg class="r" style="left:1147px;top:749px;" width="18" height="17" viewBox="0 0 18 17"><path d="M2 10L10 2h6v6l-8 8z" fill="#cfcfcf" stroke="#555" stroke-width="1.1" stroke-linejoin="round"/><circle cx="13" cy="5" r="1.2" fill="none" stroke="#555" stroke-width=".8"/></svg>
<svg class="r" style="left:1177px;top:748px;" width="20" height="18" viewBox="0 0 20 18"><rect x="1" y="8" width="11" height="8" rx="1" fill="#e8e8e8" stroke="#444" stroke-width="1"/><circle cx="6.5" cy="12" r="1.8" fill="#222"/><rect x="2.5" y="10" width="1" height="4" fill="#222"/><circle cx="13.5" cy="6" r="5" fill="#c8dff0" stroke="#666" stroke-width="1"/><circle cx="13.5" cy="6" r="1.5" fill="#fff" stroke="#888" stroke-width=".6"/></svg>
<svg class="r" style="left:1207px;top:748px;" width="20" height="19" viewBox="0 0 20 19"><path d="M1.5 1.5h17v13H6l-3 3v-3H1.5z" fill="#f4f4f4" stroke="#555" stroke-width="1"/><text x="10" y="12" font-family="Liberation Sans" font-size="11" font-weight="700" fill="#111" text-anchor="middle">n.</text></svg>
<svg class="r" style="left:1238px;top:751px;" width="16" height="13" viewBox="0 0 16 13"><rect x="1" y="6" width="8" height="6" rx="1" fill="#333"/><path d="M7 6V3.5a2.5 2.5 0 0 1 5 0V5" stroke="#333" stroke-width="1.5" fill="none"/></svg>
<svg class="r" style="left:350px;top:780px;" width="580" height="20" viewBox="0 0 580 20"><defs><linearGradient id="dk" x1="0" y1="0" x2="0" y2="1"><stop offset="0" stop-color="#c9d0da"/><stop offset=".5" stop-color="#dfe4ea"/><stop offset="1" stop-color="#eef1f4"/></linearGradient></defs><path d="M10 3h559l7 14H4z" fill="url(#dk)"/><path d="M4 16h572" stroke="#fbfcfd" stroke-width="1.6"/><path d="M4 17h572v3H4z" fill="#8a9099"/></svg>
<svg class="r" style="left:363px;top:778px;" width="16" height="16" viewBox="0 0 16 16"><rect x="1" y="1" width="14" height="13" rx="1.5" fill="#6aaae8"/><rect x="8" y="1" width="7" height="13" fill="#cfe3f6"/><path d="M8 1c-1.5 4-1.5 8 0 13" stroke="#223" stroke-width=".8" fill="none"/><circle cx="5" cy="5" r=".8" fill="#123"/><circle cx="11" cy="5" r=".8" fill="#123"/><path d="M3.5 9.5c2 2 7 2 9 0" stroke="#123" stroke-width=".8" fill="none"/></svg>
<svg class="r" style="left:382px;top:778px;" width="16" height="16" viewBox="0 0 16 16"><circle cx="8" cy="8" r="7" fill="#b8b8b8" stroke="#777" stroke-width=".8"/><circle cx="8" cy="8" r="5.5" fill="#d8d8d8"/><path d="M4 12l2-5 4-3 2 0 0 2-3 4z" fill="#444"/></svg>
<svg class="r" style="left:401px;top:778px;" width="16" height="16" viewBox="0 0 16 16"><rect x="1" y="2" width="14" height="11" rx="1" fill="#555" stroke="#333" stroke-width=".6"/><rect x="2.5" y="3.5" width="5" height="3" fill="#e08a3a"/><rect x="8.5" y="3.5" width="5" height="8" fill="#4a9a4a"/><rect x="2.5" y="8" width="5" height="3" fill="#ddd"/></svg>
<svg class="r" style="left:420px;top:778px;" width="16" height="16" viewBox="0 0 16 16"><circle cx="8" cy="8" r="7" fill="#c8c8c8" stroke="#888" stroke-width=".6"/><circle cx="8" cy="8" r="5.8" fill="#3a9ae8"/><path d="M11 5L9 9 5 11l2-4z" fill="#fff"/><path d="M11 5L9 9 7 7z" fill="#e33"/></svg>
<svg class="r" style="left:439px;top:778px;" width="16" height="16" viewBox="0 0 16 16"><rect x="2" y="1.5" width="12" height="13" fill="#f6f6f6" stroke="#999" stroke-width=".6" transform="rotate(-6 8 8)"/><rect x="3.5" y="3" width="9" height="10" fill="#7aa8e0" transform="rotate(-6 8 8)"/><path d="M6 5l4 2 1 4-3-1z" fill="#8a6a3a"/></svg>
<svg class="r" style="left:458px;top:778px;" width="16" height="16" viewBox="0 0 16 16"><path d="M3 2h10l1 1v11l-1 1H3z" fill="#c8a472" stroke="#7a5a32" stroke-width=".7"/><path d="M3 2v13" stroke="#5a3a1a" stroke-width="1"/><circle cx="8.5" cy="8" r="2" fill="none" stroke="#e6d0a8" stroke-width=".6"/></svg>
<svg class="r" style="left:477px;top:778px;" width="16" height="16" viewBox="0 0 16 16"><rect x="1.5" y="1.5" width="13" height="13" rx="1" fill="#fff" stroke="#888" stroke-width=".6"/><rect x="1.5" y="1.5" width="13" height="4" fill="#d9342a"/><text x="8" y="13.2" text-anchor="middle" font-family="Liberation Sans" font-weight="700" font-size="7.5" fill="#111">26</text></svg>
<svg class="r" style="left:496px;top:778px;" width="16" height="16" viewBox="0 0 16 16"><rect x="2" y="1.5" width="12" height="13" fill="#fdfdfd" stroke="#666" stroke-width=".7" transform="rotate(-4 8 8)"/><path d="M4 4.5h1M6.5 4.5h5M4 7.5h1M6.5 7.5h5M4 10.5h1M6.5 10.5h5" stroke="#444" stroke-width=".9"/></svg>
<svg class="r" style="left:515px;top:778px;" width="16" height="16" viewBox="0 0 16 16"><rect x="1.5" y="2.5" width="12" height="12" fill="#f2e68a" stroke="#9a8a4a" stroke-width=".6" transform="rotate(-4 8 8)"/><rect x="1.5" y="1.5" width="12" height="2" fill="#7a5a3a" transform="rotate(-4 8 8)"/></svg>
<svg class="r" style="left:534px;top:778px;" width="16" height="16" viewBox="0 0 16 16"><rect x="1.5" y="2" width="12" height="12" fill="#f3f3f0" stroke="#aaa" stroke-width=".6" transform="rotate(-6 8 8)"/><path d="M3 7h10M6 3v10" stroke="#f2c64a" stroke-width="1.4"/><rect x="3" y="8" width="3" height="4" fill="#7ac06a"/><circle cx="11.5" cy="11.5" r="3" fill="#fff" stroke="#bbb" stroke-width=".5"/><circle cx="11.5" cy="11" r="1" fill="#d33"/></svg>
<svg class="r" style="left:553px;top:778px;" width="16" height="16" viewBox="0 0 16 16"><ellipse cx="7" cy="7" rx="6.5" ry="5.5" fill="#4aa8f2"/><path d="M3 11l-1 3 4-2z" fill="#4aa8f2"/><ellipse cx="11" cy="11" rx="4.5" ry="3.5" fill="#e8eef4" stroke="#9ab" stroke-width=".5"/></svg>
<svg class="r" style="left:572px;top:778px;" width="16" height="16" viewBox="0 0 16 16"><rect x="1" y="3" width="10" height="10" rx="2" fill="#ccd2d8" stroke="#888" stroke-width=".5"/><circle cx="6" cy="8" r="3.5" fill="#1a3a6a"/><circle cx="6" cy="8" r="1.5" fill="#4a7ac0"/><path d="M11 8l4-3v6z" fill="#c8ced4"/></svg>
<svg class="r" style="left:591px;top:778px;" width="16" height="16" viewBox="0 0 16 16"><rect x="2" y="1" width="11" height="14" rx="1" fill="#b8b8b8" stroke="#666" stroke-width=".5"/><rect x="3" y="2.5" width="9" height="9" fill="#d8201a"/><path d="M11 13l4-6" stroke="#6a4a3a" stroke-width="1.4"/></svg>
<svg class="r" style="left:610px;top:778px;" width="16" height="16" viewBox="0 0 16 16"><rect x="1" y="2" width="12" height="9" fill="#e8902a" stroke="#777" stroke-width=".5" transform="rotate(-6 7 7)"/><path d="M3 9l4-5 3 5" stroke="#3a2a1a" stroke-width="1" fill="none"/><rect x="5" y="9" width="10" height="6" rx="1" fill="#6a7080" stroke="#333" stroke-width=".5"/><circle cx="10" cy="12" r="1.6" fill="#222"/></svg>
<svg class="r" style="left:629px;top:778px;" width="16" height="16" viewBox="0 0 16 16"><circle cx="8" cy="8" r="7" fill="#2a78d8" stroke="#555" stroke-width=".6"/><circle cx="8" cy="8" r="5.5" fill="#3a90e8"/><path d="M6.5 11V5.5l4-1V10" stroke="#fff" stroke-width="1.1" fill="none"/><circle cx="5.8" cy="11" r="1.2" fill="#fff"/><circle cx="9.8" cy="10" r="1.2" fill="#fff"/></svg>
<svg class="r" style="left:648px;top:778px;" width="16" height="16" viewBox="0 0 16 16"><circle cx="8" cy="8" r="7" fill="#f09a2a" stroke="#c06a1a" stroke-width=".6"/><path d="M3.5 5.5c1.5-.5 3-.5 4.5.5v6c-1.5-1-3-1-4.5-.5zM12.5 5.5c-1.5-.5-3-.5-4.5.5v6c1.5-1 3-1 4.5-.5z" fill="#fff"/></svg>
<svg class="r" style="left:667px;top:778px;" width="16" height="16" viewBox="0 0 16 16"><circle cx="8" cy="8" r="7" fill="#2a7ae0" stroke="#1a4a9a" stroke-width=".6"/><path d="M5 11.5L8.2 4M11 11.5L8 5M4.5 9.5h7" stroke="#fff" stroke-width="1.1"/></svg>
<svg class="r" style="left:686px;top:778px;" width="16" height="16" viewBox="0 0 16 16"><rect x="1" y="1.5" width="14" height="13" rx="1.5" fill="#8a8a8a" stroke="#555" stroke-width=".6"/><circle cx="8" cy="8" r="4.5" fill="none" stroke="#ddd" stroke-width="1.6"/><circle cx="8" cy="8" r="2" fill="#666"/></svg>
<svg class="r" style="left:705px;top:778px;" width="16" height="16" viewBox="0 0 16 16"><text x="8" y="14" text-anchor="middle" font-family="Liberation Sans" font-weight="700" font-size="15" fill="#2a92e0">W</text></svg>
<svg class="r" style="left:724px;top:778px;" width="16" height="16" viewBox="0 0 16 16"><text x="8" y="14" text-anchor="middle" font-family="Liberation Sans" font-weight="700" font-size="15" fill="#e8402a">P</text></svg>
<svg class="r" style="left:743px;top:778px;" width="16" height="16" viewBox="0 0 16 16"><text x="8" y="14" text-anchor="middle" font-family="Liberation Sans" font-weight="700" font-size="15" fill="#38a838">X</text></svg>
<svg class="r" style="left:762px;top:778px;" width="16" height="16" viewBox="0 0 16 16"><text x="8" y="14" text-anchor="middle" font-family="Liberation Sans" font-weight="700" font-size="15" fill="#f0b020">O</text></svg>
<svg class="r" style="left:781px;top:778px;" width="16" height="16" viewBox="0 0 16 16"><rect x="1" y="1" width="14" height="14" rx="2" fill="#f2f2f2" stroke="#555" stroke-width=".6"/><path d="M1 1h7v14H1z" fill="#111"/><text x="8" y="13" text-anchor="middle" font-family="Liberation Serif" font-weight="700" font-size="13" fill="#fff" stroke="#111" stroke-width=".3">S</text></svg>
<svg class="r" style="left:810px;top:780px;" width="17" height="13" viewBox="0 0 17 13"><rect x=".5" y=".5" width="16" height="10" fill="#f2f2f2" stroke="#999" stroke-width=".6"/><path d="M2 3h12M2 5h9M2 7h11" stroke="#ccc" stroke-width=".8"/><path d="M11 8l2 4 1-1.5 2 1" stroke="#111" stroke-width="1.2" fill="none"/></svg>
<svg class="r" style="left:829px;top:780px;" width="17" height="13" viewBox="0 0 17 13"><rect x=".5" y=".5" width="16" height="10" fill="#f2f2f2" stroke="#999" stroke-width=".6"/><path d="M2 3h12M2 5h9M2 7h11" stroke="#ccc" stroke-width=".8"/><circle cx="13" cy="10" r="2.5" fill="#3a8ae0"/></svg>
<svg class="r" style="left:848px;top:780px;" width="17" height="13" viewBox="0 0 17 13"><rect x=".5" y=".5" width="16" height="10" fill="#f2f2f2" stroke="#999" stroke-width=".6"/><path d="M2 3h12M2 5h9M2 7h11" stroke="#ccc" stroke-width=".8"/><circle cx="13" cy="10" r="2.5" fill="#3a8ae0"/></svg>
<svg class="r" style="left:867px;top:780px;" width="17" height="13" viewBox="0 0 17 13"><rect x=".5" y=".5" width="16" height="10" fill="#f2f2f2" stroke="#999" stroke-width=".6"/><path d="M2 3h12M2 5h9M2 7h11" stroke="#ccc" stroke-width=".8"/><circle cx="13" cy="10" r="2.5" fill="#3a8ae0"/></svg>
<svg class="r" style="left:886px;top:780px;" width="17" height="13" viewBox="0 0 17 13"><rect x=".5" y=".5" width="16" height="10" fill="#f2f2f2" stroke="#999" stroke-width=".6"/><path d="M2 3h12M2 5h9M2 7h11" stroke="#ccc" stroke-width=".8"/><circle cx="13" cy="10" r="2.5" fill="#3a8ae0"/></svg>
<svg class="r" style="left:906px;top:777px;" width="14" height="17" viewBox="0 0 14 17"><path d="M2 3h10l-1 13H3z" fill="#9aa0a8" stroke="#555" stroke-width=".7"/><path d="M4 5v10M7 5v10M10 5v10" stroke="#666" stroke-width=".6"/><ellipse cx="7" cy="3" rx="5.5" ry="1.5" fill="#c8ccd2" stroke="#555" stroke-width=".6"/></svg>
<div class="r" style="left:367px;top:797px;width:8px;height:3px;background:#e8f6ff;box-shadow:0 0 3px 1px #8fd0ff"></div>
<div class="r" style="left:424px;top:797px;width:8px;height:3px;background:#e8f6ff;box-shadow:0 0 3px 1px #8fd0ff"></div>
<div class="r" style="left:709px;top:797px;width:8px;height:3px;background:#e8f6ff;box-shadow:0 0 3px 1px #8fd0ff"></div>
<div class="r" style="left:785px;top:797px;width:8px;height:3px;background:#e8f6ff;box-shadow:0 0 3px 1px #8fd0ff"></div></body></html>
